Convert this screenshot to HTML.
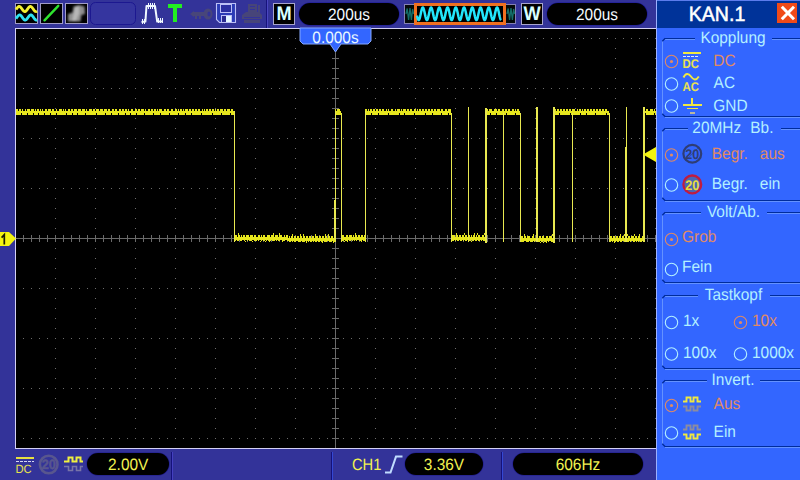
<!DOCTYPE html>
<html lang="de">
<head>
<meta charset="utf-8">
<title>KAN.1</title>
<style>
html,body{margin:0;padding:0;background:#333399;width:800px;height:480px;overflow:hidden}
svg{display:block;position:absolute;left:0;top:0}
rect:not([rx]){shape-rendering:crispEdges}
text{white-space:pre;font-family:"Liberation Sans",sans-serif}
</style>
</head>
<body>
<svg width="800" height="480" viewBox="0 0 800 480" text-rendering="geometricPrecision">
<rect x="0" y="0" width="800" height="480" fill="#333399" />
<rect x="16" y="29" width="640" height="419" fill="#000" />
<rect x="15" y="28" width="641" height="1" fill="#d4d0f4" />
<rect x="15" y="28" width="1" height="421" fill="#d4d0f4" />
<rect x="15" y="448" width="641" height="1" fill="#d4d0f4" />
<g fill="#6c6c6c">
<rect x="23" y="38" width="1" height="1"/>
<rect x="31" y="38" width="1" height="1"/>
<rect x="39" y="38" width="1" height="1"/>
<rect x="47" y="38" width="1" height="1"/>
<rect x="55" y="38" width="1" height="1"/>
<rect x="63" y="38" width="1" height="1"/>
<rect x="71" y="38" width="1" height="1"/>
<rect x="79" y="38" width="1" height="1"/>
<rect x="87" y="38" width="1" height="1"/>
<rect x="95" y="38" width="1" height="1"/>
<rect x="103" y="38" width="1" height="1"/>
<rect x="111" y="38" width="1" height="1"/>
<rect x="119" y="38" width="1" height="1"/>
<rect x="127" y="38" width="1" height="1"/>
<rect x="135" y="38" width="1" height="1"/>
<rect x="143" y="38" width="1" height="1"/>
<rect x="151" y="38" width="1" height="1"/>
<rect x="159" y="38" width="1" height="1"/>
<rect x="167" y="38" width="1" height="1"/>
<rect x="175" y="38" width="1" height="1"/>
<rect x="183" y="38" width="1" height="1"/>
<rect x="191" y="38" width="1" height="1"/>
<rect x="199" y="38" width="1" height="1"/>
<rect x="207" y="38" width="1" height="1"/>
<rect x="215" y="38" width="1" height="1"/>
<rect x="223" y="38" width="1" height="1"/>
<rect x="231" y="38" width="1" height="1"/>
<rect x="239" y="38" width="1" height="1"/>
<rect x="247" y="38" width="1" height="1"/>
<rect x="255" y="38" width="1" height="1"/>
<rect x="263" y="38" width="1" height="1"/>
<rect x="271" y="38" width="1" height="1"/>
<rect x="279" y="38" width="1" height="1"/>
<rect x="287" y="38" width="1" height="1"/>
<rect x="295" y="38" width="1" height="1"/>
<rect x="303" y="38" width="1" height="1"/>
<rect x="311" y="38" width="1" height="1"/>
<rect x="319" y="38" width="1" height="1"/>
<rect x="327" y="38" width="1" height="1"/>
<rect x="335" y="38" width="1" height="1"/>
<rect x="343" y="38" width="1" height="1"/>
<rect x="351" y="38" width="1" height="1"/>
<rect x="359" y="38" width="1" height="1"/>
<rect x="367" y="38" width="1" height="1"/>
<rect x="375" y="38" width="1" height="1"/>
<rect x="383" y="38" width="1" height="1"/>
<rect x="391" y="38" width="1" height="1"/>
<rect x="399" y="38" width="1" height="1"/>
<rect x="407" y="38" width="1" height="1"/>
<rect x="415" y="38" width="1" height="1"/>
<rect x="423" y="38" width="1" height="1"/>
<rect x="431" y="38" width="1" height="1"/>
<rect x="439" y="38" width="1" height="1"/>
<rect x="447" y="38" width="1" height="1"/>
<rect x="455" y="38" width="1" height="1"/>
<rect x="463" y="38" width="1" height="1"/>
<rect x="471" y="38" width="1" height="1"/>
<rect x="479" y="38" width="1" height="1"/>
<rect x="487" y="38" width="1" height="1"/>
<rect x="495" y="38" width="1" height="1"/>
<rect x="503" y="38" width="1" height="1"/>
<rect x="511" y="38" width="1" height="1"/>
<rect x="519" y="38" width="1" height="1"/>
<rect x="527" y="38" width="1" height="1"/>
<rect x="535" y="38" width="1" height="1"/>
<rect x="543" y="38" width="1" height="1"/>
<rect x="551" y="38" width="1" height="1"/>
<rect x="559" y="38" width="1" height="1"/>
<rect x="567" y="38" width="1" height="1"/>
<rect x="575" y="38" width="1" height="1"/>
<rect x="583" y="38" width="1" height="1"/>
<rect x="591" y="38" width="1" height="1"/>
<rect x="599" y="38" width="1" height="1"/>
<rect x="607" y="38" width="1" height="1"/>
<rect x="615" y="38" width="1" height="1"/>
<rect x="623" y="38" width="1" height="1"/>
<rect x="631" y="38" width="1" height="1"/>
<rect x="639" y="38" width="1" height="1"/>
<rect x="647" y="38" width="1" height="1"/>
<rect x="655" y="38" width="1" height="1"/>
<rect x="23" y="88" width="1" height="1"/>
<rect x="31" y="88" width="1" height="1"/>
<rect x="39" y="88" width="1" height="1"/>
<rect x="47" y="88" width="1" height="1"/>
<rect x="55" y="88" width="1" height="1"/>
<rect x="63" y="88" width="1" height="1"/>
<rect x="71" y="88" width="1" height="1"/>
<rect x="79" y="88" width="1" height="1"/>
<rect x="87" y="88" width="1" height="1"/>
<rect x="95" y="88" width="1" height="1"/>
<rect x="103" y="88" width="1" height="1"/>
<rect x="111" y="88" width="1" height="1"/>
<rect x="119" y="88" width="1" height="1"/>
<rect x="127" y="88" width="1" height="1"/>
<rect x="135" y="88" width="1" height="1"/>
<rect x="143" y="88" width="1" height="1"/>
<rect x="151" y="88" width="1" height="1"/>
<rect x="159" y="88" width="1" height="1"/>
<rect x="167" y="88" width="1" height="1"/>
<rect x="175" y="88" width="1" height="1"/>
<rect x="183" y="88" width="1" height="1"/>
<rect x="191" y="88" width="1" height="1"/>
<rect x="199" y="88" width="1" height="1"/>
<rect x="207" y="88" width="1" height="1"/>
<rect x="215" y="88" width="1" height="1"/>
<rect x="223" y="88" width="1" height="1"/>
<rect x="231" y="88" width="1" height="1"/>
<rect x="239" y="88" width="1" height="1"/>
<rect x="247" y="88" width="1" height="1"/>
<rect x="255" y="88" width="1" height="1"/>
<rect x="263" y="88" width="1" height="1"/>
<rect x="271" y="88" width="1" height="1"/>
<rect x="279" y="88" width="1" height="1"/>
<rect x="287" y="88" width="1" height="1"/>
<rect x="295" y="88" width="1" height="1"/>
<rect x="303" y="88" width="1" height="1"/>
<rect x="311" y="88" width="1" height="1"/>
<rect x="319" y="88" width="1" height="1"/>
<rect x="327" y="88" width="1" height="1"/>
<rect x="335" y="88" width="1" height="1"/>
<rect x="343" y="88" width="1" height="1"/>
<rect x="351" y="88" width="1" height="1"/>
<rect x="359" y="88" width="1" height="1"/>
<rect x="367" y="88" width="1" height="1"/>
<rect x="375" y="88" width="1" height="1"/>
<rect x="383" y="88" width="1" height="1"/>
<rect x="391" y="88" width="1" height="1"/>
<rect x="399" y="88" width="1" height="1"/>
<rect x="407" y="88" width="1" height="1"/>
<rect x="415" y="88" width="1" height="1"/>
<rect x="423" y="88" width="1" height="1"/>
<rect x="431" y="88" width="1" height="1"/>
<rect x="439" y="88" width="1" height="1"/>
<rect x="447" y="88" width="1" height="1"/>
<rect x="455" y="88" width="1" height="1"/>
<rect x="463" y="88" width="1" height="1"/>
<rect x="471" y="88" width="1" height="1"/>
<rect x="479" y="88" width="1" height="1"/>
<rect x="487" y="88" width="1" height="1"/>
<rect x="495" y="88" width="1" height="1"/>
<rect x="503" y="88" width="1" height="1"/>
<rect x="511" y="88" width="1" height="1"/>
<rect x="519" y="88" width="1" height="1"/>
<rect x="527" y="88" width="1" height="1"/>
<rect x="535" y="88" width="1" height="1"/>
<rect x="543" y="88" width="1" height="1"/>
<rect x="551" y="88" width="1" height="1"/>
<rect x="559" y="88" width="1" height="1"/>
<rect x="567" y="88" width="1" height="1"/>
<rect x="575" y="88" width="1" height="1"/>
<rect x="583" y="88" width="1" height="1"/>
<rect x="591" y="88" width="1" height="1"/>
<rect x="599" y="88" width="1" height="1"/>
<rect x="607" y="88" width="1" height="1"/>
<rect x="615" y="88" width="1" height="1"/>
<rect x="623" y="88" width="1" height="1"/>
<rect x="631" y="88" width="1" height="1"/>
<rect x="639" y="88" width="1" height="1"/>
<rect x="647" y="88" width="1" height="1"/>
<rect x="655" y="88" width="1" height="1"/>
<rect x="23" y="138" width="1" height="1"/>
<rect x="31" y="138" width="1" height="1"/>
<rect x="39" y="138" width="1" height="1"/>
<rect x="47" y="138" width="1" height="1"/>
<rect x="55" y="138" width="1" height="1"/>
<rect x="63" y="138" width="1" height="1"/>
<rect x="71" y="138" width="1" height="1"/>
<rect x="79" y="138" width="1" height="1"/>
<rect x="87" y="138" width="1" height="1"/>
<rect x="95" y="138" width="1" height="1"/>
<rect x="103" y="138" width="1" height="1"/>
<rect x="111" y="138" width="1" height="1"/>
<rect x="119" y="138" width="1" height="1"/>
<rect x="127" y="138" width="1" height="1"/>
<rect x="135" y="138" width="1" height="1"/>
<rect x="143" y="138" width="1" height="1"/>
<rect x="151" y="138" width="1" height="1"/>
<rect x="159" y="138" width="1" height="1"/>
<rect x="167" y="138" width="1" height="1"/>
<rect x="175" y="138" width="1" height="1"/>
<rect x="183" y="138" width="1" height="1"/>
<rect x="191" y="138" width="1" height="1"/>
<rect x="199" y="138" width="1" height="1"/>
<rect x="207" y="138" width="1" height="1"/>
<rect x="215" y="138" width="1" height="1"/>
<rect x="223" y="138" width="1" height="1"/>
<rect x="231" y="138" width="1" height="1"/>
<rect x="239" y="138" width="1" height="1"/>
<rect x="247" y="138" width="1" height="1"/>
<rect x="255" y="138" width="1" height="1"/>
<rect x="263" y="138" width="1" height="1"/>
<rect x="271" y="138" width="1" height="1"/>
<rect x="279" y="138" width="1" height="1"/>
<rect x="287" y="138" width="1" height="1"/>
<rect x="295" y="138" width="1" height="1"/>
<rect x="303" y="138" width="1" height="1"/>
<rect x="311" y="138" width="1" height="1"/>
<rect x="319" y="138" width="1" height="1"/>
<rect x="327" y="138" width="1" height="1"/>
<rect x="335" y="138" width="1" height="1"/>
<rect x="343" y="138" width="1" height="1"/>
<rect x="351" y="138" width="1" height="1"/>
<rect x="359" y="138" width="1" height="1"/>
<rect x="367" y="138" width="1" height="1"/>
<rect x="375" y="138" width="1" height="1"/>
<rect x="383" y="138" width="1" height="1"/>
<rect x="391" y="138" width="1" height="1"/>
<rect x="399" y="138" width="1" height="1"/>
<rect x="407" y="138" width="1" height="1"/>
<rect x="415" y="138" width="1" height="1"/>
<rect x="423" y="138" width="1" height="1"/>
<rect x="431" y="138" width="1" height="1"/>
<rect x="439" y="138" width="1" height="1"/>
<rect x="447" y="138" width="1" height="1"/>
<rect x="455" y="138" width="1" height="1"/>
<rect x="463" y="138" width="1" height="1"/>
<rect x="471" y="138" width="1" height="1"/>
<rect x="479" y="138" width="1" height="1"/>
<rect x="487" y="138" width="1" height="1"/>
<rect x="495" y="138" width="1" height="1"/>
<rect x="503" y="138" width="1" height="1"/>
<rect x="511" y="138" width="1" height="1"/>
<rect x="519" y="138" width="1" height="1"/>
<rect x="527" y="138" width="1" height="1"/>
<rect x="535" y="138" width="1" height="1"/>
<rect x="543" y="138" width="1" height="1"/>
<rect x="551" y="138" width="1" height="1"/>
<rect x="559" y="138" width="1" height="1"/>
<rect x="567" y="138" width="1" height="1"/>
<rect x="575" y="138" width="1" height="1"/>
<rect x="583" y="138" width="1" height="1"/>
<rect x="591" y="138" width="1" height="1"/>
<rect x="599" y="138" width="1" height="1"/>
<rect x="607" y="138" width="1" height="1"/>
<rect x="615" y="138" width="1" height="1"/>
<rect x="623" y="138" width="1" height="1"/>
<rect x="631" y="138" width="1" height="1"/>
<rect x="639" y="138" width="1" height="1"/>
<rect x="647" y="138" width="1" height="1"/>
<rect x="655" y="138" width="1" height="1"/>
<rect x="23" y="188" width="1" height="1"/>
<rect x="31" y="188" width="1" height="1"/>
<rect x="39" y="188" width="1" height="1"/>
<rect x="47" y="188" width="1" height="1"/>
<rect x="55" y="188" width="1" height="1"/>
<rect x="63" y="188" width="1" height="1"/>
<rect x="71" y="188" width="1" height="1"/>
<rect x="79" y="188" width="1" height="1"/>
<rect x="87" y="188" width="1" height="1"/>
<rect x="95" y="188" width="1" height="1"/>
<rect x="103" y="188" width="1" height="1"/>
<rect x="111" y="188" width="1" height="1"/>
<rect x="119" y="188" width="1" height="1"/>
<rect x="127" y="188" width="1" height="1"/>
<rect x="135" y="188" width="1" height="1"/>
<rect x="143" y="188" width="1" height="1"/>
<rect x="151" y="188" width="1" height="1"/>
<rect x="159" y="188" width="1" height="1"/>
<rect x="167" y="188" width="1" height="1"/>
<rect x="175" y="188" width="1" height="1"/>
<rect x="183" y="188" width="1" height="1"/>
<rect x="191" y="188" width="1" height="1"/>
<rect x="199" y="188" width="1" height="1"/>
<rect x="207" y="188" width="1" height="1"/>
<rect x="215" y="188" width="1" height="1"/>
<rect x="223" y="188" width="1" height="1"/>
<rect x="231" y="188" width="1" height="1"/>
<rect x="239" y="188" width="1" height="1"/>
<rect x="247" y="188" width="1" height="1"/>
<rect x="255" y="188" width="1" height="1"/>
<rect x="263" y="188" width="1" height="1"/>
<rect x="271" y="188" width="1" height="1"/>
<rect x="279" y="188" width="1" height="1"/>
<rect x="287" y="188" width="1" height="1"/>
<rect x="295" y="188" width="1" height="1"/>
<rect x="303" y="188" width="1" height="1"/>
<rect x="311" y="188" width="1" height="1"/>
<rect x="319" y="188" width="1" height="1"/>
<rect x="327" y="188" width="1" height="1"/>
<rect x="335" y="188" width="1" height="1"/>
<rect x="343" y="188" width="1" height="1"/>
<rect x="351" y="188" width="1" height="1"/>
<rect x="359" y="188" width="1" height="1"/>
<rect x="367" y="188" width="1" height="1"/>
<rect x="375" y="188" width="1" height="1"/>
<rect x="383" y="188" width="1" height="1"/>
<rect x="391" y="188" width="1" height="1"/>
<rect x="399" y="188" width="1" height="1"/>
<rect x="407" y="188" width="1" height="1"/>
<rect x="415" y="188" width="1" height="1"/>
<rect x="423" y="188" width="1" height="1"/>
<rect x="431" y="188" width="1" height="1"/>
<rect x="439" y="188" width="1" height="1"/>
<rect x="447" y="188" width="1" height="1"/>
<rect x="455" y="188" width="1" height="1"/>
<rect x="463" y="188" width="1" height="1"/>
<rect x="471" y="188" width="1" height="1"/>
<rect x="479" y="188" width="1" height="1"/>
<rect x="487" y="188" width="1" height="1"/>
<rect x="495" y="188" width="1" height="1"/>
<rect x="503" y="188" width="1" height="1"/>
<rect x="511" y="188" width="1" height="1"/>
<rect x="519" y="188" width="1" height="1"/>
<rect x="527" y="188" width="1" height="1"/>
<rect x="535" y="188" width="1" height="1"/>
<rect x="543" y="188" width="1" height="1"/>
<rect x="551" y="188" width="1" height="1"/>
<rect x="559" y="188" width="1" height="1"/>
<rect x="567" y="188" width="1" height="1"/>
<rect x="575" y="188" width="1" height="1"/>
<rect x="583" y="188" width="1" height="1"/>
<rect x="591" y="188" width="1" height="1"/>
<rect x="599" y="188" width="1" height="1"/>
<rect x="607" y="188" width="1" height="1"/>
<rect x="615" y="188" width="1" height="1"/>
<rect x="623" y="188" width="1" height="1"/>
<rect x="631" y="188" width="1" height="1"/>
<rect x="639" y="188" width="1" height="1"/>
<rect x="647" y="188" width="1" height="1"/>
<rect x="655" y="188" width="1" height="1"/>
<rect x="23" y="288" width="1" height="1"/>
<rect x="31" y="288" width="1" height="1"/>
<rect x="39" y="288" width="1" height="1"/>
<rect x="47" y="288" width="1" height="1"/>
<rect x="55" y="288" width="1" height="1"/>
<rect x="63" y="288" width="1" height="1"/>
<rect x="71" y="288" width="1" height="1"/>
<rect x="79" y="288" width="1" height="1"/>
<rect x="87" y="288" width="1" height="1"/>
<rect x="95" y="288" width="1" height="1"/>
<rect x="103" y="288" width="1" height="1"/>
<rect x="111" y="288" width="1" height="1"/>
<rect x="119" y="288" width="1" height="1"/>
<rect x="127" y="288" width="1" height="1"/>
<rect x="135" y="288" width="1" height="1"/>
<rect x="143" y="288" width="1" height="1"/>
<rect x="151" y="288" width="1" height="1"/>
<rect x="159" y="288" width="1" height="1"/>
<rect x="167" y="288" width="1" height="1"/>
<rect x="175" y="288" width="1" height="1"/>
<rect x="183" y="288" width="1" height="1"/>
<rect x="191" y="288" width="1" height="1"/>
<rect x="199" y="288" width="1" height="1"/>
<rect x="207" y="288" width="1" height="1"/>
<rect x="215" y="288" width="1" height="1"/>
<rect x="223" y="288" width="1" height="1"/>
<rect x="231" y="288" width="1" height="1"/>
<rect x="239" y="288" width="1" height="1"/>
<rect x="247" y="288" width="1" height="1"/>
<rect x="255" y="288" width="1" height="1"/>
<rect x="263" y="288" width="1" height="1"/>
<rect x="271" y="288" width="1" height="1"/>
<rect x="279" y="288" width="1" height="1"/>
<rect x="287" y="288" width="1" height="1"/>
<rect x="295" y="288" width="1" height="1"/>
<rect x="303" y="288" width="1" height="1"/>
<rect x="311" y="288" width="1" height="1"/>
<rect x="319" y="288" width="1" height="1"/>
<rect x="327" y="288" width="1" height="1"/>
<rect x="335" y="288" width="1" height="1"/>
<rect x="343" y="288" width="1" height="1"/>
<rect x="351" y="288" width="1" height="1"/>
<rect x="359" y="288" width="1" height="1"/>
<rect x="367" y="288" width="1" height="1"/>
<rect x="375" y="288" width="1" height="1"/>
<rect x="383" y="288" width="1" height="1"/>
<rect x="391" y="288" width="1" height="1"/>
<rect x="399" y="288" width="1" height="1"/>
<rect x="407" y="288" width="1" height="1"/>
<rect x="415" y="288" width="1" height="1"/>
<rect x="423" y="288" width="1" height="1"/>
<rect x="431" y="288" width="1" height="1"/>
<rect x="439" y="288" width="1" height="1"/>
<rect x="447" y="288" width="1" height="1"/>
<rect x="455" y="288" width="1" height="1"/>
<rect x="463" y="288" width="1" height="1"/>
<rect x="471" y="288" width="1" height="1"/>
<rect x="479" y="288" width="1" height="1"/>
<rect x="487" y="288" width="1" height="1"/>
<rect x="495" y="288" width="1" height="1"/>
<rect x="503" y="288" width="1" height="1"/>
<rect x="511" y="288" width="1" height="1"/>
<rect x="519" y="288" width="1" height="1"/>
<rect x="527" y="288" width="1" height="1"/>
<rect x="535" y="288" width="1" height="1"/>
<rect x="543" y="288" width="1" height="1"/>
<rect x="551" y="288" width="1" height="1"/>
<rect x="559" y="288" width="1" height="1"/>
<rect x="567" y="288" width="1" height="1"/>
<rect x="575" y="288" width="1" height="1"/>
<rect x="583" y="288" width="1" height="1"/>
<rect x="591" y="288" width="1" height="1"/>
<rect x="599" y="288" width="1" height="1"/>
<rect x="607" y="288" width="1" height="1"/>
<rect x="615" y="288" width="1" height="1"/>
<rect x="623" y="288" width="1" height="1"/>
<rect x="631" y="288" width="1" height="1"/>
<rect x="639" y="288" width="1" height="1"/>
<rect x="647" y="288" width="1" height="1"/>
<rect x="655" y="288" width="1" height="1"/>
<rect x="23" y="338" width="1" height="1"/>
<rect x="31" y="338" width="1" height="1"/>
<rect x="39" y="338" width="1" height="1"/>
<rect x="47" y="338" width="1" height="1"/>
<rect x="55" y="338" width="1" height="1"/>
<rect x="63" y="338" width="1" height="1"/>
<rect x="71" y="338" width="1" height="1"/>
<rect x="79" y="338" width="1" height="1"/>
<rect x="87" y="338" width="1" height="1"/>
<rect x="95" y="338" width="1" height="1"/>
<rect x="103" y="338" width="1" height="1"/>
<rect x="111" y="338" width="1" height="1"/>
<rect x="119" y="338" width="1" height="1"/>
<rect x="127" y="338" width="1" height="1"/>
<rect x="135" y="338" width="1" height="1"/>
<rect x="143" y="338" width="1" height="1"/>
<rect x="151" y="338" width="1" height="1"/>
<rect x="159" y="338" width="1" height="1"/>
<rect x="167" y="338" width="1" height="1"/>
<rect x="175" y="338" width="1" height="1"/>
<rect x="183" y="338" width="1" height="1"/>
<rect x="191" y="338" width="1" height="1"/>
<rect x="199" y="338" width="1" height="1"/>
<rect x="207" y="338" width="1" height="1"/>
<rect x="215" y="338" width="1" height="1"/>
<rect x="223" y="338" width="1" height="1"/>
<rect x="231" y="338" width="1" height="1"/>
<rect x="239" y="338" width="1" height="1"/>
<rect x="247" y="338" width="1" height="1"/>
<rect x="255" y="338" width="1" height="1"/>
<rect x="263" y="338" width="1" height="1"/>
<rect x="271" y="338" width="1" height="1"/>
<rect x="279" y="338" width="1" height="1"/>
<rect x="287" y="338" width="1" height="1"/>
<rect x="295" y="338" width="1" height="1"/>
<rect x="303" y="338" width="1" height="1"/>
<rect x="311" y="338" width="1" height="1"/>
<rect x="319" y="338" width="1" height="1"/>
<rect x="327" y="338" width="1" height="1"/>
<rect x="335" y="338" width="1" height="1"/>
<rect x="343" y="338" width="1" height="1"/>
<rect x="351" y="338" width="1" height="1"/>
<rect x="359" y="338" width="1" height="1"/>
<rect x="367" y="338" width="1" height="1"/>
<rect x="375" y="338" width="1" height="1"/>
<rect x="383" y="338" width="1" height="1"/>
<rect x="391" y="338" width="1" height="1"/>
<rect x="399" y="338" width="1" height="1"/>
<rect x="407" y="338" width="1" height="1"/>
<rect x="415" y="338" width="1" height="1"/>
<rect x="423" y="338" width="1" height="1"/>
<rect x="431" y="338" width="1" height="1"/>
<rect x="439" y="338" width="1" height="1"/>
<rect x="447" y="338" width="1" height="1"/>
<rect x="455" y="338" width="1" height="1"/>
<rect x="463" y="338" width="1" height="1"/>
<rect x="471" y="338" width="1" height="1"/>
<rect x="479" y="338" width="1" height="1"/>
<rect x="487" y="338" width="1" height="1"/>
<rect x="495" y="338" width="1" height="1"/>
<rect x="503" y="338" width="1" height="1"/>
<rect x="511" y="338" width="1" height="1"/>
<rect x="519" y="338" width="1" height="1"/>
<rect x="527" y="338" width="1" height="1"/>
<rect x="535" y="338" width="1" height="1"/>
<rect x="543" y="338" width="1" height="1"/>
<rect x="551" y="338" width="1" height="1"/>
<rect x="559" y="338" width="1" height="1"/>
<rect x="567" y="338" width="1" height="1"/>
<rect x="575" y="338" width="1" height="1"/>
<rect x="583" y="338" width="1" height="1"/>
<rect x="591" y="338" width="1" height="1"/>
<rect x="599" y="338" width="1" height="1"/>
<rect x="607" y="338" width="1" height="1"/>
<rect x="615" y="338" width="1" height="1"/>
<rect x="623" y="338" width="1" height="1"/>
<rect x="631" y="338" width="1" height="1"/>
<rect x="639" y="338" width="1" height="1"/>
<rect x="647" y="338" width="1" height="1"/>
<rect x="655" y="338" width="1" height="1"/>
<rect x="23" y="388" width="1" height="1"/>
<rect x="31" y="388" width="1" height="1"/>
<rect x="39" y="388" width="1" height="1"/>
<rect x="47" y="388" width="1" height="1"/>
<rect x="55" y="388" width="1" height="1"/>
<rect x="63" y="388" width="1" height="1"/>
<rect x="71" y="388" width="1" height="1"/>
<rect x="79" y="388" width="1" height="1"/>
<rect x="87" y="388" width="1" height="1"/>
<rect x="95" y="388" width="1" height="1"/>
<rect x="103" y="388" width="1" height="1"/>
<rect x="111" y="388" width="1" height="1"/>
<rect x="119" y="388" width="1" height="1"/>
<rect x="127" y="388" width="1" height="1"/>
<rect x="135" y="388" width="1" height="1"/>
<rect x="143" y="388" width="1" height="1"/>
<rect x="151" y="388" width="1" height="1"/>
<rect x="159" y="388" width="1" height="1"/>
<rect x="167" y="388" width="1" height="1"/>
<rect x="175" y="388" width="1" height="1"/>
<rect x="183" y="388" width="1" height="1"/>
<rect x="191" y="388" width="1" height="1"/>
<rect x="199" y="388" width="1" height="1"/>
<rect x="207" y="388" width="1" height="1"/>
<rect x="215" y="388" width="1" height="1"/>
<rect x="223" y="388" width="1" height="1"/>
<rect x="231" y="388" width="1" height="1"/>
<rect x="239" y="388" width="1" height="1"/>
<rect x="247" y="388" width="1" height="1"/>
<rect x="255" y="388" width="1" height="1"/>
<rect x="263" y="388" width="1" height="1"/>
<rect x="271" y="388" width="1" height="1"/>
<rect x="279" y="388" width="1" height="1"/>
<rect x="287" y="388" width="1" height="1"/>
<rect x="295" y="388" width="1" height="1"/>
<rect x="303" y="388" width="1" height="1"/>
<rect x="311" y="388" width="1" height="1"/>
<rect x="319" y="388" width="1" height="1"/>
<rect x="327" y="388" width="1" height="1"/>
<rect x="335" y="388" width="1" height="1"/>
<rect x="343" y="388" width="1" height="1"/>
<rect x="351" y="388" width="1" height="1"/>
<rect x="359" y="388" width="1" height="1"/>
<rect x="367" y="388" width="1" height="1"/>
<rect x="375" y="388" width="1" height="1"/>
<rect x="383" y="388" width="1" height="1"/>
<rect x="391" y="388" width="1" height="1"/>
<rect x="399" y="388" width="1" height="1"/>
<rect x="407" y="388" width="1" height="1"/>
<rect x="415" y="388" width="1" height="1"/>
<rect x="423" y="388" width="1" height="1"/>
<rect x="431" y="388" width="1" height="1"/>
<rect x="439" y="388" width="1" height="1"/>
<rect x="447" y="388" width="1" height="1"/>
<rect x="455" y="388" width="1" height="1"/>
<rect x="463" y="388" width="1" height="1"/>
<rect x="471" y="388" width="1" height="1"/>
<rect x="479" y="388" width="1" height="1"/>
<rect x="487" y="388" width="1" height="1"/>
<rect x="495" y="388" width="1" height="1"/>
<rect x="503" y="388" width="1" height="1"/>
<rect x="511" y="388" width="1" height="1"/>
<rect x="519" y="388" width="1" height="1"/>
<rect x="527" y="388" width="1" height="1"/>
<rect x="535" y="388" width="1" height="1"/>
<rect x="543" y="388" width="1" height="1"/>
<rect x="551" y="388" width="1" height="1"/>
<rect x="559" y="388" width="1" height="1"/>
<rect x="567" y="388" width="1" height="1"/>
<rect x="575" y="388" width="1" height="1"/>
<rect x="583" y="388" width="1" height="1"/>
<rect x="591" y="388" width="1" height="1"/>
<rect x="599" y="388" width="1" height="1"/>
<rect x="607" y="388" width="1" height="1"/>
<rect x="615" y="388" width="1" height="1"/>
<rect x="623" y="388" width="1" height="1"/>
<rect x="631" y="388" width="1" height="1"/>
<rect x="639" y="388" width="1" height="1"/>
<rect x="647" y="388" width="1" height="1"/>
<rect x="655" y="388" width="1" height="1"/>
<rect x="23" y="438" width="1" height="1"/>
<rect x="31" y="438" width="1" height="1"/>
<rect x="39" y="438" width="1" height="1"/>
<rect x="47" y="438" width="1" height="1"/>
<rect x="55" y="438" width="1" height="1"/>
<rect x="63" y="438" width="1" height="1"/>
<rect x="71" y="438" width="1" height="1"/>
<rect x="79" y="438" width="1" height="1"/>
<rect x="87" y="438" width="1" height="1"/>
<rect x="95" y="438" width="1" height="1"/>
<rect x="103" y="438" width="1" height="1"/>
<rect x="111" y="438" width="1" height="1"/>
<rect x="119" y="438" width="1" height="1"/>
<rect x="127" y="438" width="1" height="1"/>
<rect x="135" y="438" width="1" height="1"/>
<rect x="143" y="438" width="1" height="1"/>
<rect x="151" y="438" width="1" height="1"/>
<rect x="159" y="438" width="1" height="1"/>
<rect x="167" y="438" width="1" height="1"/>
<rect x="175" y="438" width="1" height="1"/>
<rect x="183" y="438" width="1" height="1"/>
<rect x="191" y="438" width="1" height="1"/>
<rect x="199" y="438" width="1" height="1"/>
<rect x="207" y="438" width="1" height="1"/>
<rect x="215" y="438" width="1" height="1"/>
<rect x="223" y="438" width="1" height="1"/>
<rect x="231" y="438" width="1" height="1"/>
<rect x="239" y="438" width="1" height="1"/>
<rect x="247" y="438" width="1" height="1"/>
<rect x="255" y="438" width="1" height="1"/>
<rect x="263" y="438" width="1" height="1"/>
<rect x="271" y="438" width="1" height="1"/>
<rect x="279" y="438" width="1" height="1"/>
<rect x="287" y="438" width="1" height="1"/>
<rect x="295" y="438" width="1" height="1"/>
<rect x="303" y="438" width="1" height="1"/>
<rect x="311" y="438" width="1" height="1"/>
<rect x="319" y="438" width="1" height="1"/>
<rect x="327" y="438" width="1" height="1"/>
<rect x="335" y="438" width="1" height="1"/>
<rect x="343" y="438" width="1" height="1"/>
<rect x="351" y="438" width="1" height="1"/>
<rect x="359" y="438" width="1" height="1"/>
<rect x="367" y="438" width="1" height="1"/>
<rect x="375" y="438" width="1" height="1"/>
<rect x="383" y="438" width="1" height="1"/>
<rect x="391" y="438" width="1" height="1"/>
<rect x="399" y="438" width="1" height="1"/>
<rect x="407" y="438" width="1" height="1"/>
<rect x="415" y="438" width="1" height="1"/>
<rect x="423" y="438" width="1" height="1"/>
<rect x="431" y="438" width="1" height="1"/>
<rect x="439" y="438" width="1" height="1"/>
<rect x="447" y="438" width="1" height="1"/>
<rect x="455" y="438" width="1" height="1"/>
<rect x="463" y="438" width="1" height="1"/>
<rect x="471" y="438" width="1" height="1"/>
<rect x="479" y="438" width="1" height="1"/>
<rect x="487" y="438" width="1" height="1"/>
<rect x="495" y="438" width="1" height="1"/>
<rect x="503" y="438" width="1" height="1"/>
<rect x="511" y="438" width="1" height="1"/>
<rect x="519" y="438" width="1" height="1"/>
<rect x="527" y="438" width="1" height="1"/>
<rect x="535" y="438" width="1" height="1"/>
<rect x="543" y="438" width="1" height="1"/>
<rect x="551" y="438" width="1" height="1"/>
<rect x="559" y="438" width="1" height="1"/>
<rect x="567" y="438" width="1" height="1"/>
<rect x="575" y="438" width="1" height="1"/>
<rect x="583" y="438" width="1" height="1"/>
<rect x="591" y="438" width="1" height="1"/>
<rect x="599" y="438" width="1" height="1"/>
<rect x="607" y="438" width="1" height="1"/>
<rect x="615" y="438" width="1" height="1"/>
<rect x="623" y="438" width="1" height="1"/>
<rect x="631" y="438" width="1" height="1"/>
<rect x="639" y="438" width="1" height="1"/>
<rect x="647" y="438" width="1" height="1"/>
<rect x="655" y="438" width="1" height="1"/>
<rect x="55" y="38" width="1" height="1"/>
<rect x="55" y="48" width="1" height="1"/>
<rect x="55" y="58" width="1" height="1"/>
<rect x="55" y="68" width="1" height="1"/>
<rect x="55" y="78" width="1" height="1"/>
<rect x="55" y="88" width="1" height="1"/>
<rect x="55" y="98" width="1" height="1"/>
<rect x="55" y="108" width="1" height="1"/>
<rect x="55" y="118" width="1" height="1"/>
<rect x="55" y="128" width="1" height="1"/>
<rect x="55" y="138" width="1" height="1"/>
<rect x="55" y="148" width="1" height="1"/>
<rect x="55" y="158" width="1" height="1"/>
<rect x="55" y="168" width="1" height="1"/>
<rect x="55" y="178" width="1" height="1"/>
<rect x="55" y="188" width="1" height="1"/>
<rect x="55" y="198" width="1" height="1"/>
<rect x="55" y="208" width="1" height="1"/>
<rect x="55" y="218" width="1" height="1"/>
<rect x="55" y="228" width="1" height="1"/>
<rect x="55" y="238" width="1" height="1"/>
<rect x="55" y="248" width="1" height="1"/>
<rect x="55" y="258" width="1" height="1"/>
<rect x="55" y="268" width="1" height="1"/>
<rect x="55" y="278" width="1" height="1"/>
<rect x="55" y="288" width="1" height="1"/>
<rect x="55" y="298" width="1" height="1"/>
<rect x="55" y="308" width="1" height="1"/>
<rect x="55" y="318" width="1" height="1"/>
<rect x="55" y="328" width="1" height="1"/>
<rect x="55" y="338" width="1" height="1"/>
<rect x="55" y="348" width="1" height="1"/>
<rect x="55" y="358" width="1" height="1"/>
<rect x="55" y="368" width="1" height="1"/>
<rect x="55" y="378" width="1" height="1"/>
<rect x="55" y="388" width="1" height="1"/>
<rect x="55" y="398" width="1" height="1"/>
<rect x="55" y="408" width="1" height="1"/>
<rect x="55" y="418" width="1" height="1"/>
<rect x="55" y="428" width="1" height="1"/>
<rect x="55" y="438" width="1" height="1"/>
<rect x="95" y="38" width="1" height="1"/>
<rect x="95" y="48" width="1" height="1"/>
<rect x="95" y="58" width="1" height="1"/>
<rect x="95" y="68" width="1" height="1"/>
<rect x="95" y="78" width="1" height="1"/>
<rect x="95" y="88" width="1" height="1"/>
<rect x="95" y="98" width="1" height="1"/>
<rect x="95" y="108" width="1" height="1"/>
<rect x="95" y="118" width="1" height="1"/>
<rect x="95" y="128" width="1" height="1"/>
<rect x="95" y="138" width="1" height="1"/>
<rect x="95" y="148" width="1" height="1"/>
<rect x="95" y="158" width="1" height="1"/>
<rect x="95" y="168" width="1" height="1"/>
<rect x="95" y="178" width="1" height="1"/>
<rect x="95" y="188" width="1" height="1"/>
<rect x="95" y="198" width="1" height="1"/>
<rect x="95" y="208" width="1" height="1"/>
<rect x="95" y="218" width="1" height="1"/>
<rect x="95" y="228" width="1" height="1"/>
<rect x="95" y="238" width="1" height="1"/>
<rect x="95" y="248" width="1" height="1"/>
<rect x="95" y="258" width="1" height="1"/>
<rect x="95" y="268" width="1" height="1"/>
<rect x="95" y="278" width="1" height="1"/>
<rect x="95" y="288" width="1" height="1"/>
<rect x="95" y="298" width="1" height="1"/>
<rect x="95" y="308" width="1" height="1"/>
<rect x="95" y="318" width="1" height="1"/>
<rect x="95" y="328" width="1" height="1"/>
<rect x="95" y="338" width="1" height="1"/>
<rect x="95" y="348" width="1" height="1"/>
<rect x="95" y="358" width="1" height="1"/>
<rect x="95" y="368" width="1" height="1"/>
<rect x="95" y="378" width="1" height="1"/>
<rect x="95" y="388" width="1" height="1"/>
<rect x="95" y="398" width="1" height="1"/>
<rect x="95" y="408" width="1" height="1"/>
<rect x="95" y="418" width="1" height="1"/>
<rect x="95" y="428" width="1" height="1"/>
<rect x="95" y="438" width="1" height="1"/>
<rect x="135" y="38" width="1" height="1"/>
<rect x="135" y="48" width="1" height="1"/>
<rect x="135" y="58" width="1" height="1"/>
<rect x="135" y="68" width="1" height="1"/>
<rect x="135" y="78" width="1" height="1"/>
<rect x="135" y="88" width="1" height="1"/>
<rect x="135" y="98" width="1" height="1"/>
<rect x="135" y="108" width="1" height="1"/>
<rect x="135" y="118" width="1" height="1"/>
<rect x="135" y="128" width="1" height="1"/>
<rect x="135" y="138" width="1" height="1"/>
<rect x="135" y="148" width="1" height="1"/>
<rect x="135" y="158" width="1" height="1"/>
<rect x="135" y="168" width="1" height="1"/>
<rect x="135" y="178" width="1" height="1"/>
<rect x="135" y="188" width="1" height="1"/>
<rect x="135" y="198" width="1" height="1"/>
<rect x="135" y="208" width="1" height="1"/>
<rect x="135" y="218" width="1" height="1"/>
<rect x="135" y="228" width="1" height="1"/>
<rect x="135" y="238" width="1" height="1"/>
<rect x="135" y="248" width="1" height="1"/>
<rect x="135" y="258" width="1" height="1"/>
<rect x="135" y="268" width="1" height="1"/>
<rect x="135" y="278" width="1" height="1"/>
<rect x="135" y="288" width="1" height="1"/>
<rect x="135" y="298" width="1" height="1"/>
<rect x="135" y="308" width="1" height="1"/>
<rect x="135" y="318" width="1" height="1"/>
<rect x="135" y="328" width="1" height="1"/>
<rect x="135" y="338" width="1" height="1"/>
<rect x="135" y="348" width="1" height="1"/>
<rect x="135" y="358" width="1" height="1"/>
<rect x="135" y="368" width="1" height="1"/>
<rect x="135" y="378" width="1" height="1"/>
<rect x="135" y="388" width="1" height="1"/>
<rect x="135" y="398" width="1" height="1"/>
<rect x="135" y="408" width="1" height="1"/>
<rect x="135" y="418" width="1" height="1"/>
<rect x="135" y="428" width="1" height="1"/>
<rect x="135" y="438" width="1" height="1"/>
<rect x="175" y="38" width="1" height="1"/>
<rect x="175" y="48" width="1" height="1"/>
<rect x="175" y="58" width="1" height="1"/>
<rect x="175" y="68" width="1" height="1"/>
<rect x="175" y="78" width="1" height="1"/>
<rect x="175" y="88" width="1" height="1"/>
<rect x="175" y="98" width="1" height="1"/>
<rect x="175" y="108" width="1" height="1"/>
<rect x="175" y="118" width="1" height="1"/>
<rect x="175" y="128" width="1" height="1"/>
<rect x="175" y="138" width="1" height="1"/>
<rect x="175" y="148" width="1" height="1"/>
<rect x="175" y="158" width="1" height="1"/>
<rect x="175" y="168" width="1" height="1"/>
<rect x="175" y="178" width="1" height="1"/>
<rect x="175" y="188" width="1" height="1"/>
<rect x="175" y="198" width="1" height="1"/>
<rect x="175" y="208" width="1" height="1"/>
<rect x="175" y="218" width="1" height="1"/>
<rect x="175" y="228" width="1" height="1"/>
<rect x="175" y="238" width="1" height="1"/>
<rect x="175" y="248" width="1" height="1"/>
<rect x="175" y="258" width="1" height="1"/>
<rect x="175" y="268" width="1" height="1"/>
<rect x="175" y="278" width="1" height="1"/>
<rect x="175" y="288" width="1" height="1"/>
<rect x="175" y="298" width="1" height="1"/>
<rect x="175" y="308" width="1" height="1"/>
<rect x="175" y="318" width="1" height="1"/>
<rect x="175" y="328" width="1" height="1"/>
<rect x="175" y="338" width="1" height="1"/>
<rect x="175" y="348" width="1" height="1"/>
<rect x="175" y="358" width="1" height="1"/>
<rect x="175" y="368" width="1" height="1"/>
<rect x="175" y="378" width="1" height="1"/>
<rect x="175" y="388" width="1" height="1"/>
<rect x="175" y="398" width="1" height="1"/>
<rect x="175" y="408" width="1" height="1"/>
<rect x="175" y="418" width="1" height="1"/>
<rect x="175" y="428" width="1" height="1"/>
<rect x="175" y="438" width="1" height="1"/>
<rect x="215" y="38" width="1" height="1"/>
<rect x="215" y="48" width="1" height="1"/>
<rect x="215" y="58" width="1" height="1"/>
<rect x="215" y="68" width="1" height="1"/>
<rect x="215" y="78" width="1" height="1"/>
<rect x="215" y="88" width="1" height="1"/>
<rect x="215" y="98" width="1" height="1"/>
<rect x="215" y="108" width="1" height="1"/>
<rect x="215" y="118" width="1" height="1"/>
<rect x="215" y="128" width="1" height="1"/>
<rect x="215" y="138" width="1" height="1"/>
<rect x="215" y="148" width="1" height="1"/>
<rect x="215" y="158" width="1" height="1"/>
<rect x="215" y="168" width="1" height="1"/>
<rect x="215" y="178" width="1" height="1"/>
<rect x="215" y="188" width="1" height="1"/>
<rect x="215" y="198" width="1" height="1"/>
<rect x="215" y="208" width="1" height="1"/>
<rect x="215" y="218" width="1" height="1"/>
<rect x="215" y="228" width="1" height="1"/>
<rect x="215" y="238" width="1" height="1"/>
<rect x="215" y="248" width="1" height="1"/>
<rect x="215" y="258" width="1" height="1"/>
<rect x="215" y="268" width="1" height="1"/>
<rect x="215" y="278" width="1" height="1"/>
<rect x="215" y="288" width="1" height="1"/>
<rect x="215" y="298" width="1" height="1"/>
<rect x="215" y="308" width="1" height="1"/>
<rect x="215" y="318" width="1" height="1"/>
<rect x="215" y="328" width="1" height="1"/>
<rect x="215" y="338" width="1" height="1"/>
<rect x="215" y="348" width="1" height="1"/>
<rect x="215" y="358" width="1" height="1"/>
<rect x="215" y="368" width="1" height="1"/>
<rect x="215" y="378" width="1" height="1"/>
<rect x="215" y="388" width="1" height="1"/>
<rect x="215" y="398" width="1" height="1"/>
<rect x="215" y="408" width="1" height="1"/>
<rect x="215" y="418" width="1" height="1"/>
<rect x="215" y="428" width="1" height="1"/>
<rect x="215" y="438" width="1" height="1"/>
<rect x="255" y="38" width="1" height="1"/>
<rect x="255" y="48" width="1" height="1"/>
<rect x="255" y="58" width="1" height="1"/>
<rect x="255" y="68" width="1" height="1"/>
<rect x="255" y="78" width="1" height="1"/>
<rect x="255" y="88" width="1" height="1"/>
<rect x="255" y="98" width="1" height="1"/>
<rect x="255" y="108" width="1" height="1"/>
<rect x="255" y="118" width="1" height="1"/>
<rect x="255" y="128" width="1" height="1"/>
<rect x="255" y="138" width="1" height="1"/>
<rect x="255" y="148" width="1" height="1"/>
<rect x="255" y="158" width="1" height="1"/>
<rect x="255" y="168" width="1" height="1"/>
<rect x="255" y="178" width="1" height="1"/>
<rect x="255" y="188" width="1" height="1"/>
<rect x="255" y="198" width="1" height="1"/>
<rect x="255" y="208" width="1" height="1"/>
<rect x="255" y="218" width="1" height="1"/>
<rect x="255" y="228" width="1" height="1"/>
<rect x="255" y="238" width="1" height="1"/>
<rect x="255" y="248" width="1" height="1"/>
<rect x="255" y="258" width="1" height="1"/>
<rect x="255" y="268" width="1" height="1"/>
<rect x="255" y="278" width="1" height="1"/>
<rect x="255" y="288" width="1" height="1"/>
<rect x="255" y="298" width="1" height="1"/>
<rect x="255" y="308" width="1" height="1"/>
<rect x="255" y="318" width="1" height="1"/>
<rect x="255" y="328" width="1" height="1"/>
<rect x="255" y="338" width="1" height="1"/>
<rect x="255" y="348" width="1" height="1"/>
<rect x="255" y="358" width="1" height="1"/>
<rect x="255" y="368" width="1" height="1"/>
<rect x="255" y="378" width="1" height="1"/>
<rect x="255" y="388" width="1" height="1"/>
<rect x="255" y="398" width="1" height="1"/>
<rect x="255" y="408" width="1" height="1"/>
<rect x="255" y="418" width="1" height="1"/>
<rect x="255" y="428" width="1" height="1"/>
<rect x="255" y="438" width="1" height="1"/>
<rect x="295" y="38" width="1" height="1"/>
<rect x="295" y="48" width="1" height="1"/>
<rect x="295" y="58" width="1" height="1"/>
<rect x="295" y="68" width="1" height="1"/>
<rect x="295" y="78" width="1" height="1"/>
<rect x="295" y="88" width="1" height="1"/>
<rect x="295" y="98" width="1" height="1"/>
<rect x="295" y="108" width="1" height="1"/>
<rect x="295" y="118" width="1" height="1"/>
<rect x="295" y="128" width="1" height="1"/>
<rect x="295" y="138" width="1" height="1"/>
<rect x="295" y="148" width="1" height="1"/>
<rect x="295" y="158" width="1" height="1"/>
<rect x="295" y="168" width="1" height="1"/>
<rect x="295" y="178" width="1" height="1"/>
<rect x="295" y="188" width="1" height="1"/>
<rect x="295" y="198" width="1" height="1"/>
<rect x="295" y="208" width="1" height="1"/>
<rect x="295" y="218" width="1" height="1"/>
<rect x="295" y="228" width="1" height="1"/>
<rect x="295" y="238" width="1" height="1"/>
<rect x="295" y="248" width="1" height="1"/>
<rect x="295" y="258" width="1" height="1"/>
<rect x="295" y="268" width="1" height="1"/>
<rect x="295" y="278" width="1" height="1"/>
<rect x="295" y="288" width="1" height="1"/>
<rect x="295" y="298" width="1" height="1"/>
<rect x="295" y="308" width="1" height="1"/>
<rect x="295" y="318" width="1" height="1"/>
<rect x="295" y="328" width="1" height="1"/>
<rect x="295" y="338" width="1" height="1"/>
<rect x="295" y="348" width="1" height="1"/>
<rect x="295" y="358" width="1" height="1"/>
<rect x="295" y="368" width="1" height="1"/>
<rect x="295" y="378" width="1" height="1"/>
<rect x="295" y="388" width="1" height="1"/>
<rect x="295" y="398" width="1" height="1"/>
<rect x="295" y="408" width="1" height="1"/>
<rect x="295" y="418" width="1" height="1"/>
<rect x="295" y="428" width="1" height="1"/>
<rect x="295" y="438" width="1" height="1"/>
<rect x="375" y="38" width="1" height="1"/>
<rect x="375" y="48" width="1" height="1"/>
<rect x="375" y="58" width="1" height="1"/>
<rect x="375" y="68" width="1" height="1"/>
<rect x="375" y="78" width="1" height="1"/>
<rect x="375" y="88" width="1" height="1"/>
<rect x="375" y="98" width="1" height="1"/>
<rect x="375" y="108" width="1" height="1"/>
<rect x="375" y="118" width="1" height="1"/>
<rect x="375" y="128" width="1" height="1"/>
<rect x="375" y="138" width="1" height="1"/>
<rect x="375" y="148" width="1" height="1"/>
<rect x="375" y="158" width="1" height="1"/>
<rect x="375" y="168" width="1" height="1"/>
<rect x="375" y="178" width="1" height="1"/>
<rect x="375" y="188" width="1" height="1"/>
<rect x="375" y="198" width="1" height="1"/>
<rect x="375" y="208" width="1" height="1"/>
<rect x="375" y="218" width="1" height="1"/>
<rect x="375" y="228" width="1" height="1"/>
<rect x="375" y="238" width="1" height="1"/>
<rect x="375" y="248" width="1" height="1"/>
<rect x="375" y="258" width="1" height="1"/>
<rect x="375" y="268" width="1" height="1"/>
<rect x="375" y="278" width="1" height="1"/>
<rect x="375" y="288" width="1" height="1"/>
<rect x="375" y="298" width="1" height="1"/>
<rect x="375" y="308" width="1" height="1"/>
<rect x="375" y="318" width="1" height="1"/>
<rect x="375" y="328" width="1" height="1"/>
<rect x="375" y="338" width="1" height="1"/>
<rect x="375" y="348" width="1" height="1"/>
<rect x="375" y="358" width="1" height="1"/>
<rect x="375" y="368" width="1" height="1"/>
<rect x="375" y="378" width="1" height="1"/>
<rect x="375" y="388" width="1" height="1"/>
<rect x="375" y="398" width="1" height="1"/>
<rect x="375" y="408" width="1" height="1"/>
<rect x="375" y="418" width="1" height="1"/>
<rect x="375" y="428" width="1" height="1"/>
<rect x="375" y="438" width="1" height="1"/>
<rect x="415" y="38" width="1" height="1"/>
<rect x="415" y="48" width="1" height="1"/>
<rect x="415" y="58" width="1" height="1"/>
<rect x="415" y="68" width="1" height="1"/>
<rect x="415" y="78" width="1" height="1"/>
<rect x="415" y="88" width="1" height="1"/>
<rect x="415" y="98" width="1" height="1"/>
<rect x="415" y="108" width="1" height="1"/>
<rect x="415" y="118" width="1" height="1"/>
<rect x="415" y="128" width="1" height="1"/>
<rect x="415" y="138" width="1" height="1"/>
<rect x="415" y="148" width="1" height="1"/>
<rect x="415" y="158" width="1" height="1"/>
<rect x="415" y="168" width="1" height="1"/>
<rect x="415" y="178" width="1" height="1"/>
<rect x="415" y="188" width="1" height="1"/>
<rect x="415" y="198" width="1" height="1"/>
<rect x="415" y="208" width="1" height="1"/>
<rect x="415" y="218" width="1" height="1"/>
<rect x="415" y="228" width="1" height="1"/>
<rect x="415" y="238" width="1" height="1"/>
<rect x="415" y="248" width="1" height="1"/>
<rect x="415" y="258" width="1" height="1"/>
<rect x="415" y="268" width="1" height="1"/>
<rect x="415" y="278" width="1" height="1"/>
<rect x="415" y="288" width="1" height="1"/>
<rect x="415" y="298" width="1" height="1"/>
<rect x="415" y="308" width="1" height="1"/>
<rect x="415" y="318" width="1" height="1"/>
<rect x="415" y="328" width="1" height="1"/>
<rect x="415" y="338" width="1" height="1"/>
<rect x="415" y="348" width="1" height="1"/>
<rect x="415" y="358" width="1" height="1"/>
<rect x="415" y="368" width="1" height="1"/>
<rect x="415" y="378" width="1" height="1"/>
<rect x="415" y="388" width="1" height="1"/>
<rect x="415" y="398" width="1" height="1"/>
<rect x="415" y="408" width="1" height="1"/>
<rect x="415" y="418" width="1" height="1"/>
<rect x="415" y="428" width="1" height="1"/>
<rect x="415" y="438" width="1" height="1"/>
<rect x="455" y="38" width="1" height="1"/>
<rect x="455" y="48" width="1" height="1"/>
<rect x="455" y="58" width="1" height="1"/>
<rect x="455" y="68" width="1" height="1"/>
<rect x="455" y="78" width="1" height="1"/>
<rect x="455" y="88" width="1" height="1"/>
<rect x="455" y="98" width="1" height="1"/>
<rect x="455" y="108" width="1" height="1"/>
<rect x="455" y="118" width="1" height="1"/>
<rect x="455" y="128" width="1" height="1"/>
<rect x="455" y="138" width="1" height="1"/>
<rect x="455" y="148" width="1" height="1"/>
<rect x="455" y="158" width="1" height="1"/>
<rect x="455" y="168" width="1" height="1"/>
<rect x="455" y="178" width="1" height="1"/>
<rect x="455" y="188" width="1" height="1"/>
<rect x="455" y="198" width="1" height="1"/>
<rect x="455" y="208" width="1" height="1"/>
<rect x="455" y="218" width="1" height="1"/>
<rect x="455" y="228" width="1" height="1"/>
<rect x="455" y="238" width="1" height="1"/>
<rect x="455" y="248" width="1" height="1"/>
<rect x="455" y="258" width="1" height="1"/>
<rect x="455" y="268" width="1" height="1"/>
<rect x="455" y="278" width="1" height="1"/>
<rect x="455" y="288" width="1" height="1"/>
<rect x="455" y="298" width="1" height="1"/>
<rect x="455" y="308" width="1" height="1"/>
<rect x="455" y="318" width="1" height="1"/>
<rect x="455" y="328" width="1" height="1"/>
<rect x="455" y="338" width="1" height="1"/>
<rect x="455" y="348" width="1" height="1"/>
<rect x="455" y="358" width="1" height="1"/>
<rect x="455" y="368" width="1" height="1"/>
<rect x="455" y="378" width="1" height="1"/>
<rect x="455" y="388" width="1" height="1"/>
<rect x="455" y="398" width="1" height="1"/>
<rect x="455" y="408" width="1" height="1"/>
<rect x="455" y="418" width="1" height="1"/>
<rect x="455" y="428" width="1" height="1"/>
<rect x="455" y="438" width="1" height="1"/>
<rect x="495" y="38" width="1" height="1"/>
<rect x="495" y="48" width="1" height="1"/>
<rect x="495" y="58" width="1" height="1"/>
<rect x="495" y="68" width="1" height="1"/>
<rect x="495" y="78" width="1" height="1"/>
<rect x="495" y="88" width="1" height="1"/>
<rect x="495" y="98" width="1" height="1"/>
<rect x="495" y="108" width="1" height="1"/>
<rect x="495" y="118" width="1" height="1"/>
<rect x="495" y="128" width="1" height="1"/>
<rect x="495" y="138" width="1" height="1"/>
<rect x="495" y="148" width="1" height="1"/>
<rect x="495" y="158" width="1" height="1"/>
<rect x="495" y="168" width="1" height="1"/>
<rect x="495" y="178" width="1" height="1"/>
<rect x="495" y="188" width="1" height="1"/>
<rect x="495" y="198" width="1" height="1"/>
<rect x="495" y="208" width="1" height="1"/>
<rect x="495" y="218" width="1" height="1"/>
<rect x="495" y="228" width="1" height="1"/>
<rect x="495" y="238" width="1" height="1"/>
<rect x="495" y="248" width="1" height="1"/>
<rect x="495" y="258" width="1" height="1"/>
<rect x="495" y="268" width="1" height="1"/>
<rect x="495" y="278" width="1" height="1"/>
<rect x="495" y="288" width="1" height="1"/>
<rect x="495" y="298" width="1" height="1"/>
<rect x="495" y="308" width="1" height="1"/>
<rect x="495" y="318" width="1" height="1"/>
<rect x="495" y="328" width="1" height="1"/>
<rect x="495" y="338" width="1" height="1"/>
<rect x="495" y="348" width="1" height="1"/>
<rect x="495" y="358" width="1" height="1"/>
<rect x="495" y="368" width="1" height="1"/>
<rect x="495" y="378" width="1" height="1"/>
<rect x="495" y="388" width="1" height="1"/>
<rect x="495" y="398" width="1" height="1"/>
<rect x="495" y="408" width="1" height="1"/>
<rect x="495" y="418" width="1" height="1"/>
<rect x="495" y="428" width="1" height="1"/>
<rect x="495" y="438" width="1" height="1"/>
<rect x="535" y="38" width="1" height="1"/>
<rect x="535" y="48" width="1" height="1"/>
<rect x="535" y="58" width="1" height="1"/>
<rect x="535" y="68" width="1" height="1"/>
<rect x="535" y="78" width="1" height="1"/>
<rect x="535" y="88" width="1" height="1"/>
<rect x="535" y="98" width="1" height="1"/>
<rect x="535" y="108" width="1" height="1"/>
<rect x="535" y="118" width="1" height="1"/>
<rect x="535" y="128" width="1" height="1"/>
<rect x="535" y="138" width="1" height="1"/>
<rect x="535" y="148" width="1" height="1"/>
<rect x="535" y="158" width="1" height="1"/>
<rect x="535" y="168" width="1" height="1"/>
<rect x="535" y="178" width="1" height="1"/>
<rect x="535" y="188" width="1" height="1"/>
<rect x="535" y="198" width="1" height="1"/>
<rect x="535" y="208" width="1" height="1"/>
<rect x="535" y="218" width="1" height="1"/>
<rect x="535" y="228" width="1" height="1"/>
<rect x="535" y="238" width="1" height="1"/>
<rect x="535" y="248" width="1" height="1"/>
<rect x="535" y="258" width="1" height="1"/>
<rect x="535" y="268" width="1" height="1"/>
<rect x="535" y="278" width="1" height="1"/>
<rect x="535" y="288" width="1" height="1"/>
<rect x="535" y="298" width="1" height="1"/>
<rect x="535" y="308" width="1" height="1"/>
<rect x="535" y="318" width="1" height="1"/>
<rect x="535" y="328" width="1" height="1"/>
<rect x="535" y="338" width="1" height="1"/>
<rect x="535" y="348" width="1" height="1"/>
<rect x="535" y="358" width="1" height="1"/>
<rect x="535" y="368" width="1" height="1"/>
<rect x="535" y="378" width="1" height="1"/>
<rect x="535" y="388" width="1" height="1"/>
<rect x="535" y="398" width="1" height="1"/>
<rect x="535" y="408" width="1" height="1"/>
<rect x="535" y="418" width="1" height="1"/>
<rect x="535" y="428" width="1" height="1"/>
<rect x="535" y="438" width="1" height="1"/>
<rect x="575" y="38" width="1" height="1"/>
<rect x="575" y="48" width="1" height="1"/>
<rect x="575" y="58" width="1" height="1"/>
<rect x="575" y="68" width="1" height="1"/>
<rect x="575" y="78" width="1" height="1"/>
<rect x="575" y="88" width="1" height="1"/>
<rect x="575" y="98" width="1" height="1"/>
<rect x="575" y="108" width="1" height="1"/>
<rect x="575" y="118" width="1" height="1"/>
<rect x="575" y="128" width="1" height="1"/>
<rect x="575" y="138" width="1" height="1"/>
<rect x="575" y="148" width="1" height="1"/>
<rect x="575" y="158" width="1" height="1"/>
<rect x="575" y="168" width="1" height="1"/>
<rect x="575" y="178" width="1" height="1"/>
<rect x="575" y="188" width="1" height="1"/>
<rect x="575" y="198" width="1" height="1"/>
<rect x="575" y="208" width="1" height="1"/>
<rect x="575" y="218" width="1" height="1"/>
<rect x="575" y="228" width="1" height="1"/>
<rect x="575" y="238" width="1" height="1"/>
<rect x="575" y="248" width="1" height="1"/>
<rect x="575" y="258" width="1" height="1"/>
<rect x="575" y="268" width="1" height="1"/>
<rect x="575" y="278" width="1" height="1"/>
<rect x="575" y="288" width="1" height="1"/>
<rect x="575" y="298" width="1" height="1"/>
<rect x="575" y="308" width="1" height="1"/>
<rect x="575" y="318" width="1" height="1"/>
<rect x="575" y="328" width="1" height="1"/>
<rect x="575" y="338" width="1" height="1"/>
<rect x="575" y="348" width="1" height="1"/>
<rect x="575" y="358" width="1" height="1"/>
<rect x="575" y="368" width="1" height="1"/>
<rect x="575" y="378" width="1" height="1"/>
<rect x="575" y="388" width="1" height="1"/>
<rect x="575" y="398" width="1" height="1"/>
<rect x="575" y="408" width="1" height="1"/>
<rect x="575" y="418" width="1" height="1"/>
<rect x="575" y="428" width="1" height="1"/>
<rect x="575" y="438" width="1" height="1"/>
<rect x="615" y="38" width="1" height="1"/>
<rect x="615" y="48" width="1" height="1"/>
<rect x="615" y="58" width="1" height="1"/>
<rect x="615" y="68" width="1" height="1"/>
<rect x="615" y="78" width="1" height="1"/>
<rect x="615" y="88" width="1" height="1"/>
<rect x="615" y="98" width="1" height="1"/>
<rect x="615" y="108" width="1" height="1"/>
<rect x="615" y="118" width="1" height="1"/>
<rect x="615" y="128" width="1" height="1"/>
<rect x="615" y="138" width="1" height="1"/>
<rect x="615" y="148" width="1" height="1"/>
<rect x="615" y="158" width="1" height="1"/>
<rect x="615" y="168" width="1" height="1"/>
<rect x="615" y="178" width="1" height="1"/>
<rect x="615" y="188" width="1" height="1"/>
<rect x="615" y="198" width="1" height="1"/>
<rect x="615" y="208" width="1" height="1"/>
<rect x="615" y="218" width="1" height="1"/>
<rect x="615" y="228" width="1" height="1"/>
<rect x="615" y="238" width="1" height="1"/>
<rect x="615" y="248" width="1" height="1"/>
<rect x="615" y="258" width="1" height="1"/>
<rect x="615" y="268" width="1" height="1"/>
<rect x="615" y="278" width="1" height="1"/>
<rect x="615" y="288" width="1" height="1"/>
<rect x="615" y="298" width="1" height="1"/>
<rect x="615" y="308" width="1" height="1"/>
<rect x="615" y="318" width="1" height="1"/>
<rect x="615" y="328" width="1" height="1"/>
<rect x="615" y="338" width="1" height="1"/>
<rect x="615" y="348" width="1" height="1"/>
<rect x="615" y="358" width="1" height="1"/>
<rect x="615" y="368" width="1" height="1"/>
<rect x="615" y="378" width="1" height="1"/>
<rect x="615" y="388" width="1" height="1"/>
<rect x="615" y="398" width="1" height="1"/>
<rect x="615" y="408" width="1" height="1"/>
<rect x="615" y="418" width="1" height="1"/>
<rect x="615" y="428" width="1" height="1"/>
<rect x="615" y="438" width="1" height="1"/>
<rect x="655" y="38" width="1" height="1"/>
<rect x="655" y="48" width="1" height="1"/>
<rect x="655" y="58" width="1" height="1"/>
<rect x="655" y="68" width="1" height="1"/>
<rect x="655" y="78" width="1" height="1"/>
<rect x="655" y="88" width="1" height="1"/>
<rect x="655" y="98" width="1" height="1"/>
<rect x="655" y="108" width="1" height="1"/>
<rect x="655" y="118" width="1" height="1"/>
<rect x="655" y="128" width="1" height="1"/>
<rect x="655" y="138" width="1" height="1"/>
<rect x="655" y="148" width="1" height="1"/>
<rect x="655" y="158" width="1" height="1"/>
<rect x="655" y="168" width="1" height="1"/>
<rect x="655" y="178" width="1" height="1"/>
<rect x="655" y="188" width="1" height="1"/>
<rect x="655" y="198" width="1" height="1"/>
<rect x="655" y="208" width="1" height="1"/>
<rect x="655" y="218" width="1" height="1"/>
<rect x="655" y="228" width="1" height="1"/>
<rect x="655" y="238" width="1" height="1"/>
<rect x="655" y="248" width="1" height="1"/>
<rect x="655" y="258" width="1" height="1"/>
<rect x="655" y="268" width="1" height="1"/>
<rect x="655" y="278" width="1" height="1"/>
<rect x="655" y="288" width="1" height="1"/>
<rect x="655" y="298" width="1" height="1"/>
<rect x="655" y="308" width="1" height="1"/>
<rect x="655" y="318" width="1" height="1"/>
<rect x="655" y="328" width="1" height="1"/>
<rect x="655" y="338" width="1" height="1"/>
<rect x="655" y="348" width="1" height="1"/>
<rect x="655" y="358" width="1" height="1"/>
<rect x="655" y="368" width="1" height="1"/>
<rect x="655" y="378" width="1" height="1"/>
<rect x="655" y="388" width="1" height="1"/>
<rect x="655" y="398" width="1" height="1"/>
<rect x="655" y="408" width="1" height="1"/>
<rect x="655" y="418" width="1" height="1"/>
<rect x="655" y="428" width="1" height="1"/>
<rect x="655" y="438" width="1" height="1"/>
</g>
<g fill="#6a6a6a">
<rect x="16" y="238" width="640" height="1" fill="#6a6a6a" />
<rect x="335" y="52" width="1" height="396" fill="#6a6a6a" />
<rect x="23" y="235" width="1" height="7"/>
<rect x="31" y="235" width="1" height="7"/>
<rect x="39" y="235" width="1" height="7"/>
<rect x="47" y="235" width="1" height="7"/>
<rect x="55" y="235" width="1" height="7"/>
<rect x="63" y="235" width="1" height="7"/>
<rect x="71" y="235" width="1" height="7"/>
<rect x="79" y="235" width="1" height="7"/>
<rect x="87" y="235" width="1" height="7"/>
<rect x="95" y="235" width="1" height="7"/>
<rect x="103" y="235" width="1" height="7"/>
<rect x="111" y="235" width="1" height="7"/>
<rect x="119" y="235" width="1" height="7"/>
<rect x="127" y="235" width="1" height="7"/>
<rect x="135" y="235" width="1" height="7"/>
<rect x="143" y="235" width="1" height="7"/>
<rect x="151" y="235" width="1" height="7"/>
<rect x="159" y="235" width="1" height="7"/>
<rect x="167" y="235" width="1" height="7"/>
<rect x="175" y="235" width="1" height="7"/>
<rect x="183" y="235" width="1" height="7"/>
<rect x="191" y="235" width="1" height="7"/>
<rect x="199" y="235" width="1" height="7"/>
<rect x="207" y="235" width="1" height="7"/>
<rect x="215" y="235" width="1" height="7"/>
<rect x="223" y="235" width="1" height="7"/>
<rect x="231" y="235" width="1" height="7"/>
<rect x="239" y="235" width="1" height="7"/>
<rect x="247" y="235" width="1" height="7"/>
<rect x="255" y="235" width="1" height="7"/>
<rect x="263" y="235" width="1" height="7"/>
<rect x="271" y="235" width="1" height="7"/>
<rect x="279" y="235" width="1" height="7"/>
<rect x="287" y="235" width="1" height="7"/>
<rect x="295" y="235" width="1" height="7"/>
<rect x="303" y="235" width="1" height="7"/>
<rect x="311" y="235" width="1" height="7"/>
<rect x="319" y="235" width="1" height="7"/>
<rect x="327" y="235" width="1" height="7"/>
<rect x="335" y="235" width="1" height="7"/>
<rect x="343" y="235" width="1" height="7"/>
<rect x="351" y="235" width="1" height="7"/>
<rect x="359" y="235" width="1" height="7"/>
<rect x="367" y="235" width="1" height="7"/>
<rect x="375" y="235" width="1" height="7"/>
<rect x="383" y="235" width="1" height="7"/>
<rect x="391" y="235" width="1" height="7"/>
<rect x="399" y="235" width="1" height="7"/>
<rect x="407" y="235" width="1" height="7"/>
<rect x="415" y="235" width="1" height="7"/>
<rect x="423" y="235" width="1" height="7"/>
<rect x="431" y="235" width="1" height="7"/>
<rect x="439" y="235" width="1" height="7"/>
<rect x="447" y="235" width="1" height="7"/>
<rect x="455" y="235" width="1" height="7"/>
<rect x="463" y="235" width="1" height="7"/>
<rect x="471" y="235" width="1" height="7"/>
<rect x="479" y="235" width="1" height="7"/>
<rect x="487" y="235" width="1" height="7"/>
<rect x="495" y="235" width="1" height="7"/>
<rect x="503" y="235" width="1" height="7"/>
<rect x="511" y="235" width="1" height="7"/>
<rect x="519" y="235" width="1" height="7"/>
<rect x="527" y="235" width="1" height="7"/>
<rect x="535" y="235" width="1" height="7"/>
<rect x="543" y="235" width="1" height="7"/>
<rect x="551" y="235" width="1" height="7"/>
<rect x="559" y="235" width="1" height="7"/>
<rect x="567" y="235" width="1" height="7"/>
<rect x="575" y="235" width="1" height="7"/>
<rect x="583" y="235" width="1" height="7"/>
<rect x="591" y="235" width="1" height="7"/>
<rect x="599" y="235" width="1" height="7"/>
<rect x="607" y="235" width="1" height="7"/>
<rect x="615" y="235" width="1" height="7"/>
<rect x="623" y="235" width="1" height="7"/>
<rect x="631" y="235" width="1" height="7"/>
<rect x="639" y="235" width="1" height="7"/>
<rect x="647" y="235" width="1" height="7"/>
<rect x="655" y="235" width="1" height="7"/>
<rect x="332" y="58" width="7" height="1"/>
<rect x="332" y="68" width="7" height="1"/>
<rect x="332" y="78" width="7" height="1"/>
<rect x="332" y="88" width="7" height="1"/>
<rect x="332" y="98" width="7" height="1"/>
<rect x="332" y="108" width="7" height="1"/>
<rect x="332" y="118" width="7" height="1"/>
<rect x="332" y="128" width="7" height="1"/>
<rect x="332" y="138" width="7" height="1"/>
<rect x="332" y="148" width="7" height="1"/>
<rect x="332" y="158" width="7" height="1"/>
<rect x="332" y="168" width="7" height="1"/>
<rect x="332" y="178" width="7" height="1"/>
<rect x="332" y="188" width="7" height="1"/>
<rect x="332" y="198" width="7" height="1"/>
<rect x="332" y="208" width="7" height="1"/>
<rect x="332" y="218" width="7" height="1"/>
<rect x="332" y="228" width="7" height="1"/>
<rect x="332" y="238" width="7" height="1"/>
<rect x="332" y="248" width="7" height="1"/>
<rect x="332" y="258" width="7" height="1"/>
<rect x="332" y="268" width="7" height="1"/>
<rect x="332" y="278" width="7" height="1"/>
<rect x="332" y="288" width="7" height="1"/>
<rect x="332" y="298" width="7" height="1"/>
<rect x="332" y="308" width="7" height="1"/>
<rect x="332" y="318" width="7" height="1"/>
<rect x="332" y="328" width="7" height="1"/>
<rect x="332" y="338" width="7" height="1"/>
<rect x="332" y="348" width="7" height="1"/>
<rect x="332" y="358" width="7" height="1"/>
<rect x="332" y="368" width="7" height="1"/>
<rect x="332" y="378" width="7" height="1"/>
<rect x="332" y="388" width="7" height="1"/>
<rect x="332" y="398" width="7" height="1"/>
<rect x="332" y="408" width="7" height="1"/>
<rect x="332" y="418" width="7" height="1"/>
<rect x="332" y="428" width="7" height="1"/>
<rect x="332" y="438" width="7" height="1"/>
</g>
<g fill="#e6e61e">
<rect x="16" y="111" width="218" height="4"/>
<rect x="16" y="109" width="2" height="2"/>
<rect x="19" y="109" width="2" height="2"/>
<rect x="22" y="109" width="1" height="2"/>
<rect x="25" y="109" width="1" height="2"/>
<rect x="27" y="109" width="3" height="2"/>
<rect x="31" y="109" width="3" height="2"/>
<rect x="35" y="109" width="1" height="2"/>
<rect x="37" y="109" width="2" height="2"/>
<rect x="40" y="109" width="1" height="2"/>
<rect x="42" y="109" width="1" height="2"/>
<rect x="45" y="109" width="2" height="2"/>
<rect x="48" y="109" width="3" height="2"/>
<rect x="52" y="109" width="2" height="2"/>
<rect x="56" y="109" width="1" height="2"/>
<rect x="59" y="109" width="3" height="2"/>
<rect x="63" y="109" width="1" height="2"/>
<rect x="65" y="109" width="1" height="2"/>
<rect x="68" y="109" width="2" height="2"/>
<rect x="71" y="109" width="2" height="2"/>
<rect x="74" y="109" width="3" height="2"/>
<rect x="78" y="109" width="3" height="2"/>
<rect x="82" y="109" width="3" height="2"/>
<rect x="86" y="109" width="1" height="2"/>
<rect x="89" y="109" width="3" height="2"/>
<rect x="93" y="109" width="2" height="2"/>
<rect x="96" y="109" width="3" height="2"/>
<rect x="100" y="109" width="3" height="2"/>
<rect x="104" y="109" width="3" height="2"/>
<rect x="108" y="109" width="2" height="2"/>
<rect x="112" y="109" width="2" height="2"/>
<rect x="115" y="109" width="2" height="2"/>
<rect x="119" y="109" width="2" height="2"/>
<rect x="122" y="109" width="2" height="2"/>
<rect x="125" y="109" width="2" height="2"/>
<rect x="128" y="109" width="1" height="2"/>
<rect x="131" y="109" width="2" height="2"/>
<rect x="135" y="109" width="2" height="2"/>
<rect x="138" y="109" width="2" height="2"/>
<rect x="141" y="109" width="3" height="2"/>
<rect x="145" y="109" width="1" height="2"/>
<rect x="148" y="109" width="2" height="2"/>
<rect x="151" y="109" width="2" height="2"/>
<rect x="154" y="109" width="2" height="2"/>
<rect x="157" y="109" width="1" height="2"/>
<rect x="159" y="109" width="3" height="2"/>
<rect x="164" y="109" width="2" height="2"/>
<rect x="167" y="109" width="2" height="2"/>
<rect x="171" y="109" width="2" height="2"/>
<rect x="175" y="109" width="2" height="2"/>
<rect x="178" y="109" width="1" height="2"/>
<rect x="180" y="109" width="2" height="2"/>
<rect x="183" y="109" width="1" height="2"/>
<rect x="185" y="109" width="3" height="2"/>
<rect x="189" y="109" width="2" height="2"/>
<rect x="192" y="109" width="2" height="2"/>
<rect x="195" y="109" width="2" height="2"/>
<rect x="198" y="109" width="2" height="2"/>
<rect x="202" y="109" width="1" height="2"/>
<rect x="204" y="109" width="1" height="2"/>
<rect x="206" y="109" width="2" height="2"/>
<rect x="209" y="109" width="2" height="2"/>
<rect x="212" y="109" width="2" height="2"/>
<rect x="215" y="109" width="1" height="2"/>
<rect x="217" y="109" width="2" height="2"/>
<rect x="220" y="109" width="3" height="2"/>
<rect x="224" y="109" width="2" height="2"/>
<rect x="227" y="109" width="3" height="2"/>
<rect x="231" y="109" width="2" height="2"/>
<rect x="335" y="111" width="6" height="4"/>
<rect x="335" y="109" width="1" height="2"/>
<rect x="337" y="109" width="3" height="2"/>
<rect x="365" y="111" width="86" height="4"/>
<rect x="365" y="109" width="2" height="2"/>
<rect x="368" y="109" width="1" height="2"/>
<rect x="370" y="109" width="2" height="2"/>
<rect x="373" y="109" width="2" height="2"/>
<rect x="376" y="109" width="2" height="2"/>
<rect x="379" y="109" width="2" height="2"/>
<rect x="382" y="109" width="2" height="2"/>
<rect x="386" y="109" width="1" height="2"/>
<rect x="388" y="109" width="1" height="2"/>
<rect x="391" y="109" width="2" height="2"/>
<rect x="395" y="109" width="1" height="2"/>
<rect x="397" y="109" width="3" height="2"/>
<rect x="401" y="109" width="1" height="2"/>
<rect x="403" y="109" width="3" height="2"/>
<rect x="407" y="109" width="2" height="2"/>
<rect x="410" y="109" width="2" height="2"/>
<rect x="414" y="109" width="2" height="2"/>
<rect x="417" y="109" width="1" height="2"/>
<rect x="419" y="109" width="2" height="2"/>
<rect x="422" y="109" width="2" height="2"/>
<rect x="425" y="109" width="2" height="2"/>
<rect x="428" y="109" width="2" height="2"/>
<rect x="431" y="109" width="2" height="2"/>
<rect x="434" y="109" width="2" height="2"/>
<rect x="437" y="109" width="3" height="2"/>
<rect x="441" y="109" width="2" height="2"/>
<rect x="445" y="109" width="2" height="2"/>
<rect x="448" y="109" width="3" height="2"/>
<rect x="486" y="111" width="34" height="4"/>
<rect x="486" y="109" width="2" height="2"/>
<rect x="489" y="109" width="3" height="2"/>
<rect x="494" y="109" width="3" height="2"/>
<rect x="498" y="109" width="2" height="2"/>
<rect x="502" y="109" width="2" height="2"/>
<rect x="505" y="109" width="2" height="2"/>
<rect x="508" y="109" width="2" height="2"/>
<rect x="512" y="109" width="2" height="2"/>
<rect x="515" y="109" width="1" height="2"/>
<rect x="517" y="109" width="2" height="2"/>
<rect x="554" y="111" width="55" height="4"/>
<rect x="554" y="109" width="2" height="2"/>
<rect x="557" y="109" width="2" height="2"/>
<rect x="560" y="109" width="2" height="2"/>
<rect x="563" y="109" width="2" height="2"/>
<rect x="566" y="109" width="2" height="2"/>
<rect x="569" y="109" width="2" height="2"/>
<rect x="572" y="109" width="3" height="2"/>
<rect x="577" y="109" width="1" height="2"/>
<rect x="579" y="109" width="2" height="2"/>
<rect x="582" y="109" width="1" height="2"/>
<rect x="584" y="109" width="2" height="2"/>
<rect x="587" y="109" width="2" height="2"/>
<rect x="590" y="109" width="2" height="2"/>
<rect x="593" y="109" width="2" height="2"/>
<rect x="596" y="109" width="2" height="2"/>
<rect x="599" y="109" width="2" height="2"/>
<rect x="602" y="109" width="2" height="2"/>
<rect x="605" y="109" width="2" height="2"/>
<rect x="643" y="111" width="13" height="4"/>
<rect x="643" y="109" width="2" height="2"/>
<rect x="646" y="109" width="2" height="2"/>
<rect x="650" y="109" width="3" height="2"/>
<rect x="654" y="109" width="1" height="2"/>
<rect x="234" y="237" width="54" height="3"/>
<rect x="235" y="235" width="2" height="2"/>
<rect x="238" y="235" width="2" height="2"/>
<rect x="241" y="235" width="1" height="2"/>
<rect x="243" y="235" width="2" height="2"/>
<rect x="246" y="235" width="3" height="2"/>
<rect x="250" y="235" width="3" height="2"/>
<rect x="254" y="235" width="2" height="2"/>
<rect x="258" y="235" width="2" height="2"/>
<rect x="261" y="235" width="1" height="2"/>
<rect x="263" y="235" width="2" height="2"/>
<rect x="267" y="235" width="3" height="2"/>
<rect x="271" y="235" width="3" height="2"/>
<rect x="275" y="235" width="3" height="2"/>
<rect x="279" y="235" width="3" height="2"/>
<rect x="284" y="235" width="1" height="2"/>
<rect x="286" y="235" width="2" height="2"/>
<rect x="235" y="240" width="1" height="1"/>
<rect x="237" y="240" width="2" height="1"/>
<rect x="240" y="240" width="2" height="1"/>
<rect x="244" y="240" width="1" height="1"/>
<rect x="247" y="240" width="1" height="1"/>
<rect x="249" y="240" width="3" height="1"/>
<rect x="254" y="240" width="3" height="1"/>
<rect x="258" y="240" width="1" height="1"/>
<rect x="261" y="240" width="1" height="1"/>
<rect x="263" y="240" width="2" height="1"/>
<rect x="266" y="240" width="1" height="1"/>
<rect x="268" y="240" width="3" height="1"/>
<rect x="272" y="240" width="3" height="1"/>
<rect x="276" y="240" width="1" height="1"/>
<rect x="278" y="240" width="2" height="1"/>
<rect x="282" y="240" width="3" height="1"/>
<rect x="287" y="240" width="1" height="1"/>
<rect x="238" y="233" width="1" height="2"/>
<rect x="245" y="241" width="1" height="1"/>
<rect x="252" y="241" width="1" height="1"/>
<rect x="260" y="241" width="1" height="1"/>
<rect x="265" y="241" width="1" height="1"/>
<rect x="269" y="241" width="1" height="1"/>
<rect x="273" y="233" width="1" height="2"/>
<rect x="279" y="233" width="1" height="2"/>
<rect x="282" y="241" width="1" height="1"/>
<rect x="288" y="238" width="47" height="3"/>
<rect x="289" y="236" width="1" height="2"/>
<rect x="291" y="236" width="2" height="2"/>
<rect x="294" y="236" width="2" height="2"/>
<rect x="297" y="236" width="2" height="2"/>
<rect x="300" y="236" width="2" height="2"/>
<rect x="303" y="236" width="2" height="2"/>
<rect x="306" y="236" width="2" height="2"/>
<rect x="309" y="236" width="2" height="2"/>
<rect x="312" y="236" width="2" height="2"/>
<rect x="315" y="236" width="3" height="2"/>
<rect x="319" y="236" width="2" height="2"/>
<rect x="322" y="236" width="2" height="2"/>
<rect x="325" y="236" width="2" height="2"/>
<rect x="328" y="236" width="2" height="2"/>
<rect x="331" y="236" width="2" height="2"/>
<rect x="289" y="241" width="2" height="1"/>
<rect x="292" y="241" width="1" height="1"/>
<rect x="294" y="241" width="2" height="1"/>
<rect x="298" y="241" width="3" height="1"/>
<rect x="302" y="241" width="3" height="1"/>
<rect x="306" y="241" width="1" height="1"/>
<rect x="308" y="241" width="1" height="1"/>
<rect x="310" y="241" width="2" height="1"/>
<rect x="313" y="241" width="1" height="1"/>
<rect x="315" y="241" width="2" height="1"/>
<rect x="318" y="241" width="2" height="1"/>
<rect x="321" y="241" width="2" height="1"/>
<rect x="324" y="241" width="3" height="1"/>
<rect x="329" y="241" width="3" height="1"/>
<rect x="333" y="241" width="2" height="1"/>
<rect x="292" y="234" width="1" height="2"/>
<rect x="300" y="234" width="1" height="2"/>
<rect x="303" y="234" width="1" height="2"/>
<rect x="306" y="242" width="1" height="1"/>
<rect x="315" y="234" width="1" height="2"/>
<rect x="322" y="242" width="1" height="1"/>
<rect x="325" y="234" width="1" height="2"/>
<rect x="328" y="234" width="1" height="2"/>
<rect x="333" y="242" width="1" height="1"/>
<rect x="341" y="237" width="24" height="3"/>
<rect x="342" y="235" width="2" height="2"/>
<rect x="346" y="235" width="2" height="2"/>
<rect x="349" y="235" width="3" height="2"/>
<rect x="353" y="235" width="1" height="2"/>
<rect x="355" y="235" width="2" height="2"/>
<rect x="358" y="235" width="2" height="2"/>
<rect x="361" y="235" width="2" height="2"/>
<rect x="364" y="235" width="1" height="2"/>
<rect x="342" y="240" width="2" height="1"/>
<rect x="345" y="240" width="3" height="1"/>
<rect x="349" y="240" width="2" height="1"/>
<rect x="352" y="240" width="1" height="1"/>
<rect x="354" y="240" width="1" height="1"/>
<rect x="356" y="240" width="1" height="1"/>
<rect x="359" y="240" width="3" height="1"/>
<rect x="363" y="240" width="2" height="1"/>
<rect x="344" y="241" width="1" height="1"/>
<rect x="347" y="241" width="1" height="1"/>
<rect x="355" y="233" width="1" height="2"/>
<rect x="361" y="241" width="1" height="1"/>
<rect x="451" y="237" width="35" height="3"/>
<rect x="452" y="235" width="3" height="2"/>
<rect x="456" y="235" width="2" height="2"/>
<rect x="459" y="235" width="2" height="2"/>
<rect x="462" y="235" width="2" height="2"/>
<rect x="465" y="235" width="2" height="2"/>
<rect x="468" y="235" width="2" height="2"/>
<rect x="471" y="235" width="1" height="2"/>
<rect x="473" y="235" width="2" height="2"/>
<rect x="476" y="235" width="1" height="2"/>
<rect x="478" y="235" width="2" height="2"/>
<rect x="482" y="235" width="2" height="2"/>
<rect x="452" y="240" width="2" height="1"/>
<rect x="455" y="240" width="1" height="1"/>
<rect x="457" y="240" width="2" height="1"/>
<rect x="460" y="240" width="2" height="1"/>
<rect x="463" y="240" width="1" height="1"/>
<rect x="465" y="240" width="2" height="1"/>
<rect x="468" y="240" width="3" height="1"/>
<rect x="472" y="240" width="2" height="1"/>
<rect x="475" y="240" width="2" height="1"/>
<rect x="478" y="240" width="2" height="1"/>
<rect x="481" y="240" width="1" height="1"/>
<rect x="483" y="240" width="2" height="1"/>
<rect x="456" y="233" width="1" height="2"/>
<rect x="464" y="233" width="1" height="2"/>
<rect x="471" y="241" width="1" height="1"/>
<rect x="474" y="233" width="1" height="2"/>
<rect x="477" y="233" width="1" height="2"/>
<rect x="484" y="233" width="1" height="2"/>
<rect x="520" y="238" width="34" height="3"/>
<rect x="521" y="236" width="2" height="2"/>
<rect x="524" y="236" width="2" height="2"/>
<rect x="527" y="236" width="3" height="2"/>
<rect x="532" y="236" width="2" height="2"/>
<rect x="536" y="236" width="2" height="2"/>
<rect x="539" y="236" width="2" height="2"/>
<rect x="542" y="236" width="2" height="2"/>
<rect x="546" y="236" width="2" height="2"/>
<rect x="549" y="236" width="3" height="2"/>
<rect x="553" y="236" width="1" height="2"/>
<rect x="521" y="241" width="3" height="1"/>
<rect x="526" y="241" width="3" height="1"/>
<rect x="530" y="241" width="3" height="1"/>
<rect x="534" y="241" width="1" height="1"/>
<rect x="536" y="241" width="1" height="1"/>
<rect x="538" y="241" width="2" height="1"/>
<rect x="541" y="241" width="2" height="1"/>
<rect x="544" y="241" width="3" height="1"/>
<rect x="548" y="241" width="1" height="1"/>
<rect x="551" y="241" width="2" height="1"/>
<rect x="524" y="234" width="1" height="2"/>
<rect x="533" y="234" width="1" height="2"/>
<rect x="540" y="242" width="1" height="1"/>
<rect x="543" y="242" width="1" height="1"/>
<rect x="546" y="242" width="1" height="1"/>
<rect x="552" y="234" width="1" height="2"/>
<rect x="609" y="238" width="34" height="3"/>
<rect x="610" y="236" width="2" height="2"/>
<rect x="613" y="236" width="2" height="2"/>
<rect x="616" y="236" width="2" height="2"/>
<rect x="619" y="236" width="2" height="2"/>
<rect x="622" y="236" width="2" height="2"/>
<rect x="625" y="236" width="1" height="2"/>
<rect x="628" y="236" width="2" height="2"/>
<rect x="631" y="236" width="3" height="2"/>
<rect x="635" y="236" width="2" height="2"/>
<rect x="638" y="236" width="2" height="2"/>
<rect x="642" y="236" width="1" height="2"/>
<rect x="610" y="241" width="1" height="1"/>
<rect x="612" y="241" width="1" height="1"/>
<rect x="614" y="241" width="2" height="1"/>
<rect x="617" y="241" width="2" height="1"/>
<rect x="620" y="241" width="2" height="1"/>
<rect x="624" y="241" width="2" height="1"/>
<rect x="627" y="241" width="2" height="1"/>
<rect x="630" y="241" width="1" height="1"/>
<rect x="633" y="241" width="2" height="1"/>
<rect x="636" y="241" width="1" height="1"/>
<rect x="638" y="241" width="1" height="1"/>
<rect x="640" y="241" width="2" height="1"/>
<rect x="614" y="242" width="1" height="1"/>
<rect x="620" y="234" width="1" height="2"/>
<rect x="624" y="234" width="1" height="2"/>
<rect x="627" y="234" width="1" height="2"/>
<rect x="634" y="234" width="1" height="2"/>
<rect x="639" y="234" width="1" height="2"/>
</g>
<rect x="21" y="113" width="1" height="2" fill="#000" />
<rect x="27" y="113" width="1" height="2" fill="#000" />
<rect x="33" y="113" width="1" height="2" fill="#000" />
<rect x="38" y="113" width="1" height="2" fill="#000" />
<rect x="44" y="113" width="1" height="2" fill="#000" />
<rect x="50" y="113" width="1" height="2" fill="#000" />
<rect x="56" y="113" width="1" height="2" fill="#000" />
<rect x="66" y="113" width="1" height="2" fill="#000" />
<rect x="72" y="113" width="1" height="2" fill="#000" />
<rect x="77" y="113" width="1" height="2" fill="#000" />
<rect x="85" y="113" width="1" height="2" fill="#000" />
<rect x="96" y="113" width="1" height="2" fill="#000" />
<rect x="105" y="113" width="1" height="2" fill="#000" />
<rect x="111" y="113" width="1" height="2" fill="#000" />
<rect x="118" y="113" width="1" height="2" fill="#000" />
<rect x="125" y="113" width="1" height="2" fill="#000" />
<rect x="130" y="113" width="1" height="2" fill="#000" />
<rect x="136" y="113" width="1" height="2" fill="#000" />
<rect x="144" y="113" width="1" height="2" fill="#000" />
<rect x="153" y="113" width="1" height="2" fill="#000" />
<rect x="160" y="113" width="1" height="2" fill="#000" />
<rect x="169" y="113" width="1" height="2" fill="#000" />
<rect x="178" y="113" width="1" height="2" fill="#000" />
<rect x="185" y="113" width="1" height="2" fill="#000" />
<rect x="191" y="113" width="1" height="2" fill="#000" />
<rect x="201" y="113" width="1" height="2" fill="#000" />
<rect x="212" y="113" width="1" height="2" fill="#000" />
<rect x="221" y="113" width="1" height="2" fill="#000" />
<rect x="230" y="113" width="1" height="2" fill="#000" />
<rect x="371" y="113" width="1" height="2" fill="#000" />
<rect x="378" y="113" width="1" height="2" fill="#000" />
<rect x="388" y="113" width="1" height="2" fill="#000" />
<rect x="399" y="113" width="1" height="2" fill="#000" />
<rect x="404" y="113" width="1" height="2" fill="#000" />
<rect x="414" y="113" width="1" height="2" fill="#000" />
<rect x="425" y="113" width="1" height="2" fill="#000" />
<rect x="432" y="113" width="1" height="2" fill="#000" />
<rect x="441" y="113" width="1" height="2" fill="#000" />
<rect x="448" y="113" width="1" height="2" fill="#000" />
<rect x="490" y="113" width="1" height="2" fill="#000" />
<rect x="496" y="113" width="1" height="2" fill="#000" />
<rect x="506" y="113" width="1" height="2" fill="#000" />
<rect x="515" y="113" width="1" height="2" fill="#000" />
<rect x="559" y="113" width="1" height="2" fill="#000" />
<rect x="570" y="113" width="1" height="2" fill="#000" />
<rect x="580" y="113" width="1" height="2" fill="#000" />
<rect x="586" y="113" width="1" height="2" fill="#000" />
<rect x="595" y="113" width="1" height="2" fill="#000" />
<rect x="606" y="113" width="1" height="2" fill="#000" />
<rect x="645" y="113" width="1" height="2" fill="#000" />
<rect x="654" y="113" width="1" height="2" fill="#000" />
<g fill="#e8e850">
<rect x="234" y="111" width="1" height="131"/>
<rect x="335" y="111" width="1" height="131"/>
<rect x="341" y="113" width="1" height="129"/>
<rect x="365" y="111" width="1" height="131"/>
<rect x="451" y="113" width="1" height="129"/>
<rect x="468" y="107" width="1" height="135"/>
<rect x="485" y="108" width="2" height="135"/>
<rect x="503" y="113" width="1" height="129"/>
<rect x="520" y="113" width="1" height="129"/>
<rect x="536" y="107" width="2" height="135"/>
<rect x="553" y="107" width="2" height="136"/>
<rect x="572" y="113" width="1" height="129"/>
<rect x="609" y="113" width="1" height="129"/>
<rect x="626" y="107" width="1" height="135"/>
<rect x="625" y="147" width="1" height="95"/>
<rect x="643" y="107" width="2" height="135"/>
<rect x="334" y="200" width="1" height="40" fill="#e8e850" />
</g>
<polygon points="0,232 9,232 16,238.5 9,246 0,246" fill="#f4f410"/>
<path d="M1.6 237.6 L4.3 234.6 L4.3 244.6" stroke="#1c1c00" stroke-width="1.7" fill="none" stroke-linejoin="miter"/>
<polygon points="643,154.5 656,147 656,162" fill="#f4f410"/>
<polygon points="300,28 371,28 371,41 368,44 341,44 335.5,52 330,44 303,44 300,41" fill="#3366ff" stroke="#86a8ff" stroke-width="1"/>
<text transform="translate(335.5 43) scale(0.935 1)" fill="#e8f8ff" font-size="16.5" text-anchor="middle" font-weight="normal" >0.000s</text>
<rect x="15" y="3" width="23" height="21" fill="#a09cc8" />
<rect x="16" y="4" width="21" height="19" fill="#000" />
<polyline points="16.0,9.58 16.5,8.85 17.0,8.14 17.5,7.50 18.0,6.97 18.5,6.60 19.0,6.42 19.5,6.44 20.0,6.66 20.5,7.06 21.0,7.62 21.5,8.28 22.0,9.00 22.5,9.72 23.0,10.38 23.5,10.94 24.0,11.34 24.5,11.56 25.0,11.58 25.5,11.40 26.0,11.03 26.5,10.50 27.0,9.86 27.5,9.15 28.0,8.42 28.5,7.74 29.0,7.16 29.5,6.72 30.0,6.47 30.5,6.40 31.0,6.55 31.5,6.88 32.0,7.38 32.5,8.01 33.0,8.71 33.5,9.44 34.0,10.13 34.5,10.73 35.0,11.20 35.5,11.50 36.0,11.60 36.5,11.50 37.0,11.20" stroke="#f4f032" stroke-width="2.8" fill="none" stroke-linejoin="round"/>
<polyline points="16.0,18.63 16.5,17.94 17.0,17.21 17.5,16.51 18.0,15.88 18.5,15.38 19.0,15.05 19.5,14.90 20.0,14.97 20.5,15.22 21.0,15.66 21.5,16.24 22.0,16.92 22.5,17.65 23.0,18.36 23.5,19.00 24.0,19.53 24.5,19.90 25.0,20.08 25.5,20.06 26.0,19.84 26.5,19.44 27.0,18.88 27.5,18.22 28.0,17.50 28.5,16.78 29.0,16.12 29.5,15.56 30.0,15.16 30.5,14.94 31.0,14.92 31.5,15.10 32.0,15.47 32.5,16.00 33.0,16.64 33.5,17.35 34.0,18.08 34.5,18.76 35.0,19.34 35.5,19.78 36.0,20.03 36.5,20.10 37.0,19.95" stroke="#2fe2f2" stroke-width="2.8" fill="none" stroke-linejoin="round"/>
<rect x="40" y="3" width="23" height="21" fill="#a09cc8" />
<rect x="41" y="4" width="21" height="19" fill="#000" />
<path d="M44.5 20.3 L58.3 5.8" stroke="#2fe42f" stroke-width="2.4" stroke-linecap="round" fill="none"/>
<rect x="65" y="3" width="23" height="21" fill="#a09cc8" />
<rect x="66" y="4" width="21" height="19" fill="#000" />
<defs><filter id="bl" x="-20%" y="-20%" width="140%" height="140%"><feGaussianBlur stdDeviation="0.9"/></filter></defs>
<g filter="url(#bl)"><path d="M68 21.5 L68 14 L72.5 12.5 L73.5 6.5 L79 5 L84.5 6.5 L85 14 L81.5 15 L80.5 21.5 Z" fill="#8e8e8e"/><path d="M75 7 L79 6 L79.5 13 L76 21 L72 21 Z" fill="#c4c4c4" opacity="0.75"/></g>
<rect x="90.5" y="2.5" width="45" height="22" rx="5" fill="#35359f" stroke="#1c1890" stroke-width="1"/>
<path d="M141.5 22 L145.4 21.6 L146.5 6 L155 6 L157.2 21.6 L162 21.6" stroke="#f0f8ff" stroke-width="2" fill="none" stroke-linejoin="round"/>
<g fill="#f0f8ff">
<rect x="148" y="3" width="1" height="6" fill="#f0f8ff" />
<rect x="150" y="3" width="1" height="6" fill="#f0f8ff" />
<rect x="152" y="3" width="1" height="6" fill="#f0f8ff" />
<rect x="154" y="3" width="1" height="6" fill="#f0f8ff" />
<rect x="142" y="19" width="1" height="5" fill="#f0f8ff" />
<rect x="144" y="19" width="1" height="5" fill="#f0f8ff" />
<rect x="158" y="18" width="1" height="5" fill="#f0f8ff" />
<rect x="160" y="18" width="1" height="5" fill="#f0f8ff" />
<rect x="162" y="18" width="1" height="5" fill="#f0f8ff" />
</g>
<rect x="168" y="4" width="14" height="4" fill="#22ee22" />
<rect x="173" y="4" width="4" height="18" fill="#22ee22" />
<g fill="#48467a">
<ellipse cx="208" cy="14" rx="4.5" ry="5.5"/>
<rect x="192" y="12" width="14" height="4" fill="#48467a" />
<polygon points="190,14 194,11 194,17"/>
<rect x="195" y="16" width="2" height="3" fill="#48467a" />
<rect x="199" y="16" width="2" height="3" fill="#48467a" />
</g>
<ellipse cx="209" cy="14" rx="1.6" ry="2.6" fill="#333399"/>
<path d="M216.5 3.5 H235.5 V22.5 H219.5 L216.5 19.5 Z" fill="#2c3cb6" stroke="#bcc0f6" stroke-width="1.1"/>
<rect x="220" y="4" width="11.5" height="8" fill="#2b2fa2" stroke="#bcc0f6" stroke-width="1"/>
<rect x="221.5" y="15.5" width="9.5" height="7" fill="#2a2a90" stroke="#bcc0f6" stroke-width="1"/>
<rect x="226" y="16" width="5" height="6" fill="#e4f6ff" />
<g fill="#474579">
<rect x="248" y="4" width="9" height="8" fill="#474579" />
<rect x="258" y="5" width="2" height="8" fill="#474579" />
<polygon points="246,12 259,12 262,15 262,19 242,19 242,15"/>
<rect x="244" y="20" width="16" height="3" fill="#474579" />
</g>
<rect x="250" y="6" width="5" height="1" fill="#333399" />
<rect x="250" y="9" width="5" height="1" fill="#333399" />
<rect x="244" y="17" width="16" height="1" fill="#333399" />
<rect x="266" y="0" width="1" height="28" fill="#17137c" />
<rect x="267" y="0" width="1" height="28" fill="#4a46c0" />
<rect x="273" y="3" width="22" height="22" fill="#a8a4cc" />
<rect x="274" y="4" width="20" height="20" fill="#000" />
<text transform="translate(284 20.3) scale(0.935 1)" fill="#d8ffff" font-size="19.5" text-anchor="middle" font-weight="bold" >M</text>
<rect x="298.4" y="2.4" width="101.2" height="23.2" rx="11.6" fill="#1a169a"/>
<rect x="299" y="3" width="100" height="22" rx="11.0" fill="#000"/>
<text transform="translate(349 20) scale(0.935 1)" fill="#f4fbff" font-size="16.5" text-anchor="middle" font-weight="normal" >200us</text>
<rect x="404" y="4" width="112" height="20" fill="#8480b4" />
<rect x="405" y="5" width="110" height="18" fill="#050a0a" />
<path d="M406 14 L407.2 8.5 L408.6 20 L410 8 L411.4 20 L412.6 9 L413.6 14" stroke="#136e68" stroke-width="1.3" fill="none"/>
<path d="M507 14 L508.2 8.5 L509.6 20 L511 8 L512.4 20 L513.6 9 L514.6 14" stroke="#136e68" stroke-width="1.3" fill="none"/>
<rect x="414" y="3" width="92" height="21.5" fill="#f07020"/>
<rect x="416.6" y="5.8" width="86.8" height="15.8" fill="#000"/>
<polyline points="417.00,15.63 417.25,16.74 417.50,17.74 417.75,18.60 418.00,19.29 418.25,19.77 418.50,20.04 418.75,20.09 419.00,19.91 419.25,19.51 419.50,18.90 419.75,18.10 420.00,17.16 420.25,16.09 420.50,14.93 420.75,13.74 421.00,12.55 421.25,11.40 421.50,10.34 421.75,9.41 422.00,8.63 422.25,8.04 422.50,7.66 422.75,7.50 423.00,7.57 423.25,7.87 423.50,8.37 423.75,9.08 424.00,9.95 424.25,10.97 424.50,12.08 424.75,13.26 425.00,14.46 425.25,15.63 425.50,16.74 425.75,17.74 426.00,18.60 426.25,19.29 426.50,19.77 426.75,20.04 427.00,20.09 427.25,19.91 427.50,19.51 427.75,18.90 428.00,18.10 428.25,17.16 428.50,16.09 428.75,14.93 429.00,13.74 429.25,12.55 429.50,11.40 429.75,10.34 430.00,9.41 430.25,8.63 430.50,8.04 430.75,7.66 431.00,7.50 431.25,7.57 431.50,7.87 431.75,8.37 432.00,9.08 432.25,9.95 432.50,10.97 432.75,12.08 433.00,13.26 433.25,14.46 433.50,15.63 433.75,16.74 434.00,17.74 434.25,18.60 434.50,19.29 434.75,19.77 435.00,20.04 435.25,20.09 435.50,19.91 435.75,19.51 436.00,18.90 436.25,18.10 436.50,17.16 436.75,16.09 437.00,14.93 437.25,13.74 437.50,12.55 437.75,11.40 438.00,10.34 438.25,9.41 438.50,8.63 438.75,8.04 439.00,7.66 439.25,7.50 439.50,7.57 439.75,7.87 440.00,8.37 440.25,9.08 440.50,9.95 440.75,10.97 441.00,12.08 441.25,13.26 441.50,14.46 441.75,15.63 442.00,16.74 442.25,17.74 442.50,18.60 442.75,19.29 443.00,19.77 443.25,20.04 443.50,20.09 443.75,19.91 444.00,19.51 444.25,18.90 444.50,18.10 444.75,17.16 445.00,16.09 445.25,14.93 445.50,13.74 445.75,12.55 446.00,11.40 446.25,10.34 446.50,9.41 446.75,8.63 447.00,8.04 447.25,7.66 447.50,7.50 447.75,7.57 448.00,7.87 448.25,8.37 448.50,9.08 448.75,9.95 449.00,10.97 449.25,12.08 449.50,13.26 449.75,14.46 450.00,15.63 450.25,16.74 450.50,17.74 450.75,18.60 451.00,19.29 451.25,19.77 451.50,20.04 451.75,20.09 452.00,19.91 452.25,19.51 452.50,18.90 452.75,18.10 453.00,17.16 453.25,16.09 453.50,14.93 453.75,13.74 454.00,12.55 454.25,11.40 454.50,10.34 454.75,9.41 455.00,8.63 455.25,8.04 455.50,7.66 455.75,7.50 456.00,7.57 456.25,7.87 456.50,8.37 456.75,9.08 457.00,9.95 457.25,10.97 457.50,12.08 457.75,13.26 458.00,14.46 458.25,15.63 458.50,16.74 458.75,17.74 459.00,18.60 459.25,19.29 459.50,19.77 459.75,20.04 460.00,20.09 460.25,19.91 460.50,19.51 460.75,18.90 461.00,18.10 461.25,17.16 461.50,16.09 461.75,14.93 462.00,13.74 462.25,12.55 462.50,11.40 462.75,10.34 463.00,9.41 463.25,8.63 463.50,8.04 463.75,7.66 464.00,7.50 464.25,7.57 464.50,7.87 464.75,8.37 465.00,9.08 465.25,9.95 465.50,10.97 465.75,12.08 466.00,13.26 466.25,14.46 466.50,15.63 466.75,16.74 467.00,17.74 467.25,18.60 467.50,19.29 467.75,19.77 468.00,20.04 468.25,20.09 468.50,19.91 468.75,19.51 469.00,18.90 469.25,18.10 469.50,17.16 469.75,16.09 470.00,14.93 470.25,13.74 470.50,12.55 470.75,11.40 471.00,10.34 471.25,9.41 471.50,8.63 471.75,8.04 472.00,7.66 472.25,7.50 472.50,7.57 472.75,7.87 473.00,8.37 473.25,9.08 473.50,9.95 473.75,10.97 474.00,12.08 474.25,13.26 474.50,14.46 474.75,15.63 475.00,16.74 475.25,17.74 475.50,18.60 475.75,19.29 476.00,19.77 476.25,20.04 476.50,20.09 476.75,19.91 477.00,19.51 477.25,18.90 477.50,18.10 477.75,17.16 478.00,16.09 478.25,14.93 478.50,13.74 478.75,12.55 479.00,11.40 479.25,10.34 479.50,9.41 479.75,8.63 480.00,8.04 480.25,7.66 480.50,7.50 480.75,7.57 481.00,7.87 481.25,8.37 481.50,9.08 481.75,9.95 482.00,10.97 482.25,12.08 482.50,13.26 482.75,14.46 483.00,15.63 483.25,16.74 483.50,17.74 483.75,18.60 484.00,19.29 484.25,19.77 484.50,20.04 484.75,20.09 485.00,19.91 485.25,19.51 485.50,18.90 485.75,18.10 486.00,17.16 486.25,16.09 486.50,14.93 486.75,13.74 487.00,12.55 487.25,11.40 487.50,10.34 487.75,9.41 488.00,8.63 488.25,8.04 488.50,7.66 488.75,7.50 489.00,7.57 489.25,7.87 489.50,8.37 489.75,9.08 490.00,9.95 490.25,10.97 490.50,12.08 490.75,13.26 491.00,14.46 491.25,15.63 491.50,16.74 491.75,17.74 492.00,18.60 492.25,19.29 492.50,19.77 492.75,20.04 493.00,20.09 493.25,19.91 493.50,19.51 493.75,18.90 494.00,18.10 494.25,17.16 494.50,16.09 494.75,14.93 495.00,13.74 495.25,12.55 495.50,11.40 495.75,10.34 496.00,9.41 496.25,8.63 496.50,8.04 496.75,7.66 497.00,7.50 497.25,7.57 497.50,7.87 497.75,8.37 498.00,9.08 498.25,9.95 498.50,10.97 498.75,12.08 499.00,13.26 499.25,14.46 499.50,15.63 499.75,16.74 500.00,17.74 500.25,18.60 500.50,19.29 500.75,19.77 501.00,20.04" stroke="#22e6fc" stroke-width="2.5" fill="none" stroke-linejoin="round"/>
<rect x="521" y="3" width="22" height="22" fill="#a8a4cc" />
<rect x="522" y="4" width="20" height="20" fill="#000" />
<text transform="translate(532 20.3) scale(0.935 1)" fill="#d8ffff" font-size="19.5" text-anchor="middle" font-weight="bold" >W</text>
<rect x="546.4" y="2.4" width="101.2" height="23.2" rx="11.6" fill="#1a169a"/>
<rect x="547" y="3" width="100" height="22" rx="11.0" fill="#000"/>
<text transform="translate(597 20) scale(0.935 1)" fill="#f4fbff" font-size="16.5" text-anchor="middle" font-weight="normal" >200us</text>
<rect x="16" y="457" width="18" height="2" fill="#e6e040" />
<rect x="16" y="461" width="3" height="1" fill="#d8d8f0" />
<rect x="20" y="461" width="3" height="1" fill="#d8d8f0" />
<rect x="24" y="461" width="3" height="1" fill="#d8d8f0" />
<rect x="28" y="461" width="3" height="1" fill="#d8d8f0" />
<rect x="32" y="461" width="2" height="1" fill="#d8d8f0" />
<text transform="translate(15.5 473) scale(0.935 1)" fill="#e6e050" font-size="12" text-anchor="start" font-weight="normal" >DC</text>
<circle cx="48.7" cy="464.5" r="8.8" fill="none" stroke="#58568e" stroke-width="2.6"/>
<text transform="translate(48.7 469.4) scale(0.935 1)" fill="#58568e" font-size="13.5" text-anchor="middle" font-weight="bold" stroke="#58568e" stroke-width="0.5" >20</text>
<path d="M64 461.5 H68.5 V457.5 H72.5 V461.5 H76.5 V457.5 H80.5 V461.5 H83" stroke="#f0f040" stroke-width="2" fill="none"/>
<path d="M64 466.5 H68.5 V470.5 H72.5 V466.5 H76.5 V470.5 H80.5 V466.5 H83" stroke="#7874a8" stroke-width="1.6" fill="none"/>
<rect x="86.4" y="452.4" width="83.2" height="23.2" rx="11.6" fill="#1f1b8c"/>
<rect x="87" y="453" width="82" height="22" rx="11.0" fill="#000"/>
<text transform="translate(128.2 470.4) scale(0.935 1)" fill="#f2f250" font-size="16.5" text-anchor="middle" font-weight="normal" >2.00V</text>
<rect x="171" y="452" width="1" height="28" fill="#15117a" />
<rect x="172" y="452" width="1" height="28" fill="#4440c0" />
<rect x="331" y="452" width="1" height="28" fill="#15117a" />
<rect x="332" y="452" width="1" height="28" fill="#3448d4" />
<text transform="translate(352 469.8) scale(0.89 1)" fill="#f2f250" font-size="16.5" text-anchor="start" font-weight="normal" >CH1</text>
<path d="M385 472.6 H390.5 L396 456.6 H402.5" stroke="#c0dcff" stroke-width="2" fill="none"/>
<rect x="404.4" y="452.4" width="79.2" height="23.2" rx="11.6" fill="#1f1b8c"/>
<rect x="405" y="453" width="78" height="22" rx="11.0" fill="#000"/>
<text transform="translate(444 470.4) scale(0.935 1)" fill="#f2f250" font-size="16.5" text-anchor="middle" font-weight="normal" >3.36V</text>
<rect x="501" y="452" width="1" height="28" fill="#15117a" />
<rect x="502" y="452" width="1" height="28" fill="#3448d4" />
<rect x="512.4" y="452.4" width="131.2" height="23.2" rx="11.6" fill="#1f1b8c"/>
<rect x="513" y="453" width="130" height="22" rx="11.0" fill="#000"/>
<text transform="translate(578 470.4) scale(0.935 1)" fill="#f2f250" font-size="16.5" text-anchor="middle" font-weight="normal" >606Hz</text>
<rect x="656" y="0" width="144" height="480" fill="#3366ff" />
<rect x="656" y="0" width="144" height="28" fill="#003399" />
<rect x="656" y="0" width="144" height="1" fill="#5c7cec" />
<rect x="656" y="0" width="1" height="480" fill="#9cb0ff" />
<text transform="translate(717 20.6) scale(0.95 1)" fill="#ffffff" font-size="20.6" text-anchor="middle" font-weight="normal" stroke="#ffffff" stroke-width="0.5" >KAN.1</text>
<rect x="777" y="3" width="20" height="20" fill="#f04a18" />
<path d="M781.8 6.8 L794 19.2 M794 6.8 L781.8 19.2" stroke="#fff" stroke-width="3" fill="none"/>
<rect x="665" y="39" width="30" height="1" fill="#6492ff" />
<rect x="772" y="39" width="28" height="1" fill="#6492ff" />
<rect x="665" y="117" width="135" height="1" fill="#6492ff" />
<rect x="665" y="38" width="30" height="1" fill="#002c9c" />
<rect x="772" y="38" width="28" height="1" fill="#002c9c" />
<rect x="665" y="116" width="135" height="1" fill="#002c9c" />
<rect x="662" y="41" width="1" height="73" fill="#6492ff" />
<path d="M665.2 38.3 L662.3 41.2 M662.3 113.8 L665.2 116.7" stroke="#002c9c" stroke-width="1.3" fill="none"/>
<text transform="translate(733.0 42.5) scale(0.935 1)" fill="#b4f0ff" font-size="16.5" text-anchor="middle" font-weight="normal" >Kopplung</text>
<rect x="665" y="129" width="23" height="1" fill="#6492ff" />
<rect x="781" y="129" width="19" height="1" fill="#6492ff" />
<rect x="665" y="201" width="135" height="1" fill="#6492ff" />
<rect x="665" y="128" width="23" height="1" fill="#002c9c" />
<rect x="781" y="128" width="19" height="1" fill="#002c9c" />
<rect x="665" y="200" width="135" height="1" fill="#002c9c" />
<rect x="662" y="131" width="1" height="67" fill="#6492ff" />
<path d="M665.2 128.3 L662.3 131.2 M662.3 197.8 L665.2 200.7" stroke="#002c9c" stroke-width="1.3" fill="none"/>
<text transform="translate(692.3 132.5) scale(0.935 1)" fill="#b4f0ff" font-size="16.5" text-anchor="start" font-weight="normal" >20MHz</text>
<text transform="translate(750.3 132.5) scale(0.935 1)" fill="#b4f0ff" font-size="16.5" text-anchor="start" font-weight="normal" >Bb.</text>
<rect x="665" y="213" width="36" height="1" fill="#6492ff" />
<rect x="767" y="213" width="33" height="1" fill="#6492ff" />
<rect x="665" y="283" width="135" height="1" fill="#6492ff" />
<rect x="665" y="212" width="36" height="1" fill="#002c9c" />
<rect x="767" y="212" width="33" height="1" fill="#002c9c" />
<rect x="665" y="282" width="135" height="1" fill="#002c9c" />
<rect x="662" y="215" width="1" height="65" fill="#6492ff" />
<path d="M665.2 212.3 L662.3 215.2 M662.3 279.8 L665.2 282.7" stroke="#002c9c" stroke-width="1.3" fill="none"/>
<text transform="translate(733.5 216.5) scale(0.935 1)" fill="#b4f0ff" font-size="16.5" text-anchor="middle" font-weight="normal" >Volt/Ab.</text>
<rect x="665" y="296" width="33" height="1" fill="#6492ff" />
<rect x="770" y="296" width="30" height="1" fill="#6492ff" />
<rect x="665" y="369" width="135" height="1" fill="#6492ff" />
<rect x="665" y="295" width="33" height="1" fill="#002c9c" />
<rect x="770" y="295" width="30" height="1" fill="#002c9c" />
<rect x="665" y="368" width="135" height="1" fill="#002c9c" />
<rect x="662" y="298" width="1" height="68" fill="#6492ff" />
<path d="M665.2 295.3 L662.3 298.2 M662.3 365.8 L665.2 368.7" stroke="#002c9c" stroke-width="1.3" fill="none"/>
<text transform="translate(733.5 299.5) scale(0.935 1)" fill="#b4f0ff" font-size="16.5" text-anchor="middle" font-weight="normal" >Tastkopf</text>
<rect x="665" y="381" width="42" height="1" fill="#6492ff" />
<rect x="760" y="381" width="40" height="1" fill="#6492ff" />
<rect x="665" y="447" width="135" height="1" fill="#6492ff" />
<rect x="665" y="380" width="42" height="1" fill="#002c9c" />
<rect x="760" y="380" width="40" height="1" fill="#002c9c" />
<rect x="665" y="446" width="135" height="1" fill="#002c9c" />
<rect x="662" y="383" width="1" height="61" fill="#6492ff" />
<path d="M665.2 380.3 L662.3 383.2 M662.3 443.8 L665.2 446.7" stroke="#002c9c" stroke-width="1.3" fill="none"/>
<text transform="translate(733.0 384.5) scale(0.935 1)" fill="#b4f0ff" font-size="16.5" text-anchor="middle" font-weight="normal" >Invert.</text>
<circle cx="671.5" cy="61.5" r="6.2" fill="none" stroke="#e08a64" stroke-width="1.1"/>
<circle cx="671.5" cy="61.5" r="1.6" fill="#e08a64"/>
<circle cx="671.5" cy="84" r="6.2" fill="none" stroke="#b4f0ff" stroke-width="1.1"/>
<circle cx="671.5" cy="106" r="6.2" fill="none" stroke="#b4f0ff" stroke-width="1.1"/>
<text transform="translate(713.3 65.5) scale(0.935 1)" fill="#e08a64" font-size="16.5" text-anchor="start" font-weight="normal" xml:space="preserve">DC</text>
<text transform="translate(713.6 88) scale(0.935 1)" fill="#b4f0ff" font-size="16.5" text-anchor="start" font-weight="normal" xml:space="preserve">AC</text>
<text transform="translate(713.3 111) scale(0.935 1)" fill="#b4f0ff" font-size="16.5" text-anchor="start" font-weight="normal" xml:space="preserve">GND</text>
<rect x="683" y="52" width="18" height="2" fill="#f0e840" />
<rect x="683" y="56" width="3" height="1" fill="#dce8ff" />
<rect x="687" y="56" width="3" height="1" fill="#dce8ff" />
<rect x="691" y="56" width="3" height="1" fill="#dce8ff" />
<rect x="695" y="56" width="3" height="1" fill="#dce8ff" />
<text transform="translate(682.6 68.4) scale(0.9 1)" fill="#e8e050" font-size="12.6" text-anchor="start" font-weight="bold" >DC</text>
<path d="M683.5 77.5 C685.5 73,688.5 73,691 76.5 S696 81,698.8 76.5" stroke="#f0e840" stroke-width="1.9" fill="none"/>
<text transform="translate(682.6 91.2) scale(0.9 1)" fill="#e8e050" font-size="12.6" text-anchor="start" font-weight="bold" >AC</text>
<rect x="691" y="98" width="2" height="7" fill="#f0e840" />
<rect x="683" y="104" width="19" height="2" fill="#f0e840" />
<rect x="687" y="108" width="11" height="1" fill="#f0e840" />
<rect x="690" y="112" width="5" height="2" fill="#b8b8a0" />
<circle cx="671.5" cy="155" r="6.2" fill="none" stroke="#e08a64" stroke-width="1.1"/>
<circle cx="671.5" cy="155" r="1.6" fill="#e08a64"/>
<circle cx="671.5" cy="185" r="6.2" fill="none" stroke="#b4f0ff" stroke-width="1.1"/>
<text transform="translate(711.8 159) scale(0.935 1)" fill="#e08a64" font-size="16.5" text-anchor="start" font-weight="normal" xml:space="preserve">Begr.</text>
<text transform="translate(759.8 159) scale(0.935 1)" fill="#e08a64" font-size="16.5" text-anchor="start" font-weight="normal" xml:space="preserve">aus</text>
<text transform="translate(711.8 189) scale(0.935 1)" fill="#b4f0ff" font-size="16.5" text-anchor="start" font-weight="normal" xml:space="preserve">Begr.</text>
<text transform="translate(759.8 189) scale(0.935 1)" fill="#b4f0ff" font-size="16.5" text-anchor="start" font-weight="normal" xml:space="preserve">ein</text>
<circle cx="692.3" cy="153.8" r="8.9" fill="none" stroke="#2f3d74" stroke-width="2.2"/>
<text transform="translate(692.3 158.9) scale(0.9 1)" fill="#2f3d74" font-size="14" text-anchor="middle" font-weight="bold" >20</text>
<path d="M686 160.3 L698.5 147.5" stroke="#2f3d74" stroke-width="1" opacity="0.6"/>
<circle cx="692.3" cy="184.4" r="8.9" fill="#4a66b4" stroke="#c01c40" stroke-width="2.3"/>
<path d="M685.5 191.3 L689.5 187" stroke="#c01c40" stroke-width="1.8"/>
<text transform="translate(692.3 189.5) scale(0.9 1)" fill="#e8dc40" font-size="14" text-anchor="middle" font-weight="bold" >20</text>
<circle cx="671.5" cy="239.5" r="6.2" fill="none" stroke="#e08a64" stroke-width="1.1"/>
<circle cx="671.5" cy="239.5" r="1.6" fill="#e08a64"/>
<circle cx="671.5" cy="269.5" r="6.2" fill="none" stroke="#b4f0ff" stroke-width="1.1"/>
<text transform="translate(682 242) scale(0.935 1)" fill="#e08a64" font-size="16.5" text-anchor="start" font-weight="normal" xml:space="preserve">Grob</text>
<text transform="translate(682 272) scale(0.935 1)" fill="#b4f0ff" font-size="16.5" text-anchor="start" font-weight="normal" xml:space="preserve">Fein</text>
<circle cx="671.5" cy="322.5" r="6.2" fill="none" stroke="#b4f0ff" stroke-width="1.1"/>
<circle cx="740.5" cy="322.5" r="6.2" fill="none" stroke="#e08a64" stroke-width="1.1"/>
<circle cx="740.5" cy="322.5" r="1.6" fill="#e08a64"/>
<circle cx="671.5" cy="354" r="6.2" fill="none" stroke="#b4f0ff" stroke-width="1.1"/>
<circle cx="740.5" cy="354" r="6.2" fill="none" stroke="#b4f0ff" stroke-width="1.1"/>
<text transform="translate(683 325.5) scale(0.935 1)" fill="#b4f0ff" font-size="16.5" text-anchor="start" font-weight="normal" xml:space="preserve">1x</text>
<text transform="translate(752 325.5) scale(0.935 1)" fill="#e08a64" font-size="16.5" text-anchor="start" font-weight="normal" xml:space="preserve">10x</text>
<text transform="translate(683 357.5) scale(0.935 1)" fill="#b4f0ff" font-size="16.5" text-anchor="start" font-weight="normal" xml:space="preserve">100x</text>
<text transform="translate(752 357.5) scale(0.935 1)" fill="#b4f0ff" font-size="16.5" text-anchor="start" font-weight="normal" xml:space="preserve">1000x</text>
<circle cx="671.5" cy="405.5" r="6.2" fill="none" stroke="#e08a64" stroke-width="1.1"/>
<circle cx="671.5" cy="405.5" r="1.6" fill="#e08a64"/>
<circle cx="671.5" cy="433" r="6.2" fill="none" stroke="#b4f0ff" stroke-width="1.1"/>
<text transform="translate(713.6 408.5) scale(0.935 1)" fill="#e08a64" font-size="16.5" text-anchor="start" font-weight="normal" xml:space="preserve">Aus</text>
<text transform="translate(713.6 436.5) scale(0.935 1)" fill="#b4f0ff" font-size="16.5" text-anchor="start" font-weight="normal" xml:space="preserve">Ein</text>
<path d="M683 401.5 H686.5 V397.5 H690.5 V401.5 H693.5 V397.5 H697.5 V401.5 H701" stroke="#f0e840" stroke-width="1.9" fill="none"/>
<path d="M683 406.5 H686.5 V410.5 H690.5 V406.5 H693.5 V410.5 H697.5 V406.5 H701" stroke="#8c8ca0" stroke-width="1.9" fill="none"/>
<path d="M683 429.5 H686.5 V425.5 H690.5 V429.5 H693.5 V425.5 H697.5 V429.5 H701" stroke="#8c8ca0" stroke-width="1.9" fill="none"/>
<path d="M683 434.5 H686.5 V438.5 H690.5 V434.5 H693.5 V438.5 H697.5 V434.5 H701" stroke="#f0e840" stroke-width="1.9" fill="none"/>
</svg>
</body>
</html>
